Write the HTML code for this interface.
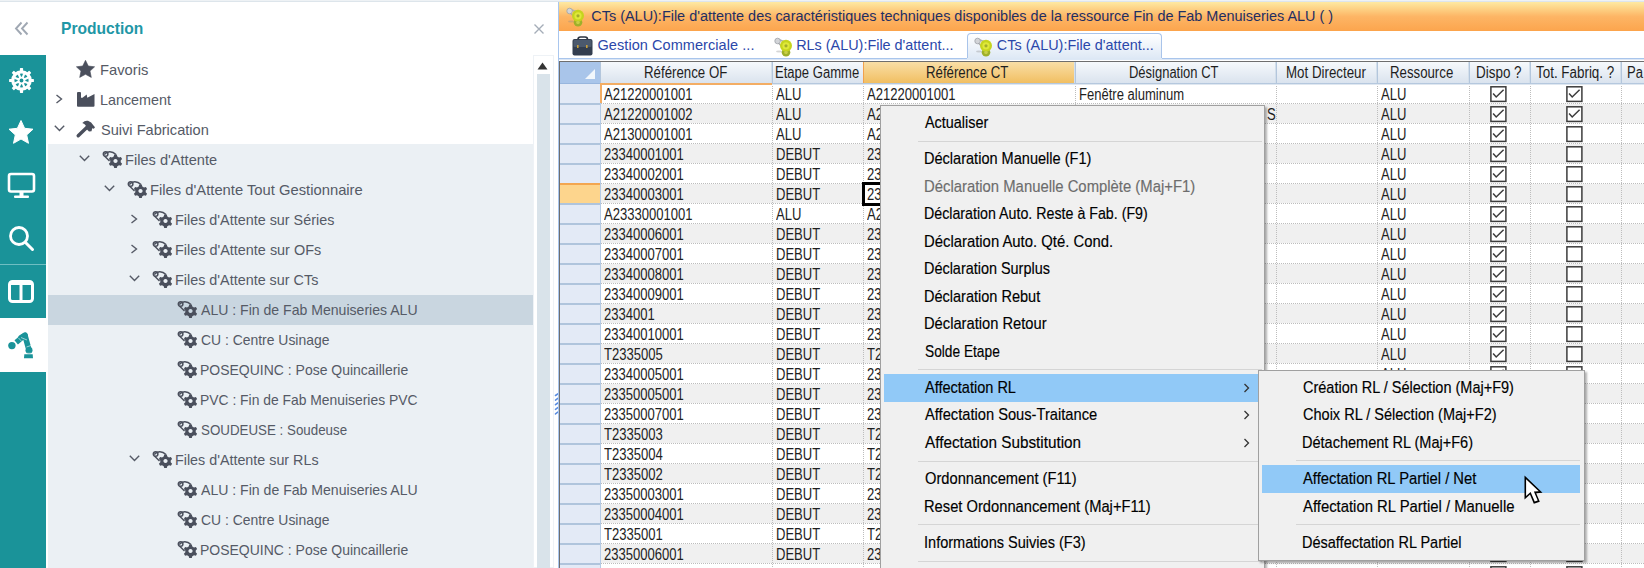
<!DOCTYPE html>
<html><head><meta charset="utf-8">
<style>
*{box-sizing:border-box;margin:0;padding:0}
html,body{width:1644px;height:568px;overflow:hidden;background:#fff;font-family:"Liberation Sans",sans-serif}
body{position:relative}
.a{position:absolute}
.t{position:absolute;white-space:nowrap;line-height:1}
svg{position:absolute;overflow:visible}
</style></head><body>

<div class="a" style="left:0px;top:0px;width:1644px;height:1px;background:#eef2f5;"></div>
<div class="a" style="left:0px;top:1px;width:1644px;height:1px;background:#dde5eb;"></div>
<svg style="left:14px;top:21px" width="16" height="15" viewBox="0 0 16 15"><path d="M7.5 1.5 L2 7.5 L7.5 13.5 M13.5 1.5 L8 7.5 L13.5 13.5" fill="none" stroke="#a0a8b3" stroke-width="1.9"/></svg>
<div class="t" style="left:61.31px;top:20.81px;font-size:15.7px;color:#1f97a6;font-weight:bold;transform:scaleX(0.9938);transform-origin:0 0;">Production</div>
<svg style="left:533px;top:23px" width="12" height="12" viewBox="0 0 12 12"><path d="M1.5 1.5 L10.5 10.5 M10.5 1.5 L1.5 10.5" stroke="#a5adb8" stroke-width="1.4"/></svg>
<div class="a" style="left:0px;top:55px;width:46px;height:513px;background:#1a9399;"></div>
<div class="a" style="left:0px;top:264px;width:46px;height:1px;background:#6fbec2;"></div>
<div class="a" style="left:0px;top:318px;width:46px;height:54px;background:#fff;"></div>
<svg style="left:8.8px;top:67.5px" width="25" height="25" viewBox="-12.5 -12.5 25 25">
<g fill="#fff"><rect x="-1.6" y="-12.4" width="3.2" height="3.4" rx="0.6" transform="rotate(0)"/><rect x="-1.6" y="-12.4" width="3.2" height="3.4" rx="0.6" transform="rotate(45)"/><rect x="-1.6" y="-12.4" width="3.2" height="3.4" rx="0.6" transform="rotate(90)"/><rect x="-1.6" y="-12.4" width="3.2" height="3.4" rx="0.6" transform="rotate(135)"/><rect x="-1.6" y="-12.4" width="3.2" height="3.4" rx="0.6" transform="rotate(180)"/><rect x="-1.6" y="-12.4" width="3.2" height="3.4" rx="0.6" transform="rotate(225)"/><rect x="-1.6" y="-12.4" width="3.2" height="3.4" rx="0.6" transform="rotate(270)"/><rect x="-1.6" y="-12.4" width="3.2" height="3.4" rx="0.6" transform="rotate(315)"/></g>
<circle r="8.7" stroke="#fff" stroke-width="3.2" fill="none"/>
<g stroke="#fff" stroke-width="2.2"><path d="M0 -2.6 V-7.6" transform="rotate(22)"/><path d="M0 -2.6 V-7.6" transform="rotate(67)"/><path d="M0 -2.6 V-7.6" transform="rotate(112)"/><path d="M0 -2.6 V-7.6" transform="rotate(157)"/><path d="M0 -2.6 V-7.6" transform="rotate(202)"/><path d="M0 -2.6 V-7.6" transform="rotate(247)"/><path d="M0 -2.6 V-7.6" transform="rotate(292)"/><path d="M0 -2.6 V-7.6" transform="rotate(337)"/></g>
<circle r="2.9" stroke="#fff" stroke-width="1.9" fill="none"/>
</svg>
<svg style="left:8px;top:120px" width="26" height="25" viewBox="0 0 26 25"><path d="M13 0.5 L16.6 8.3 L25 9.2 L18.7 14.9 L20.5 23.3 L13 19 L5.5 23.3 L7.3 14.9 L1 9.2 L9.4 8.3 Z" fill="#fff" stroke="#fff" stroke-width="1" stroke-linejoin="round"/></svg>
<svg style="left:7px;top:172px" width="29" height="27" viewBox="0 0 29 27"><rect x="2" y="2" width="25" height="17.5" rx="2" fill="none" stroke="#fff" stroke-width="2.6"/><rect x="12.5" y="20" width="4" height="4" fill="#fff"/><rect x="7" y="23.5" width="15" height="2.5" rx="1" fill="#fff"/></svg>
<svg style="left:7px;top:224px" width="28" height="28" viewBox="0 0 28 28"><circle cx="12" cy="12" r="8.5" fill="none" stroke="#fff" stroke-width="2.8"/><path d="M18.5 18.5 L25.5 25.5" stroke="#fff" stroke-width="3" stroke-linecap="round"/></svg>
<svg style="left:8px;top:280px" width="26" height="23" viewBox="0 0 26 23"><rect x="1.5" y="1.5" width="23" height="20" rx="3" fill="none" stroke="#fff" stroke-width="3"/><rect x="11.5" y="2" width="3" height="19" fill="#fff"/><rect x="2" y="2" width="22" height="3" fill="#fff"/></svg>
<svg style="left:4px;top:328px" width="34" height="34" viewBox="0 0 34 34">
<g fill="#1a9399" stroke="#1a9399">
<circle cx="7.9" cy="17.6" r="3.7" stroke="none"/>
<path d="M12.2 14.3 L19.8 8" stroke-width="5.4" stroke-linecap="butt"/><path d="M17 9.5 L21 7" stroke-width="5.4" stroke-linecap="round"/>
<path d="M21 7.5 L24.3 19.5" stroke-width="5.6" stroke-linecap="round"/>
<circle cx="25" cy="22.3" r="3.5" stroke="none"/>
<path d="M20.3 26.2 H28.7 L29 30.2 H20 Z" stroke="none"/>
</g>
<g stroke="#fff" stroke-width="0.8" opacity="0.7"><path d="M14.5 10 L17.5 13.2 M17 9.5 L23 12 M22.5 19 L27 17.5 M21 25.3 H28.5"/></g>
</svg>
<div class="a" style="left:48px;top:144px;width:485px;height:424px;background:#ebf0f4;"></div>
<div class="a" style="left:48px;top:295px;width:485px;height:29.5px;background:#c9d6e0;"></div>
<div class="a" style="left:533px;top:55px;width:21px;height:513px;border:1px solid #eef2f6;background:#fff"></div>
<svg style="left:537px;top:62px" width="11" height="8" viewBox="0 0 11 8"><path d="M5.5 0.5 L10.5 7.5 L0.5 7.5 Z" fill="#333"/></svg>
<div class="a" style="left:537px;top:74px;width:13px;height:494px;background:#d9e3ea;"></div>
<svg style="left:553px;top:392px" width="6" height="28" viewBox="0 0 6 28"><g stroke="#5a8de0" stroke-width="1.6" stroke-linecap="round"><path d="M2.5 3.5 L4.8 1.8"/><path d="M2.5 8.1 L4.8 6.4"/><path d="M2.5 12.7 L4.8 11.0"/><path d="M2.5 17.3 L4.8 15.6"/><path d="M2.5 21.9 L4.8 20.2"/></g></svg>
<svg style="left:76px;top:60px" width="19" height="18" viewBox="0 0 19 18"><path d="M9.5 0.3 L12.3 6 L18.6 6.8 L14 11.1 L15.3 17.4 L9.5 14.3 L3.7 17.4 L5 11.1 L0.4 6.8 L6.7 6 Z" fill="#4a4f5c" stroke="#4a4f5c" stroke-width="0.6" stroke-linejoin="round"/></svg>
<div class="t" style="left:99.62px;top:62.30px;font-size:15px;color:#555a66;transform:scaleX(0.9837);transform-origin:0 0;">Favoris</div>
<svg style="left:55px;top:94px" width="9" height="10" viewBox="0 0 9 10"><path d="M1.5 1 L6.5 5 L1.5 9" fill="none" stroke="#555a66" stroke-width="1.4"/></svg>
<svg style="left:76px;top:91px" width="19" height="16" viewBox="0 0 19 16"><path d="M1 2 Q1 1 2 1 H4 Q5 1 5 2 V6.8 L6.5 6.8 L10.7 3.6 L11.3 6.8 L18.5 3 V14.8 Q18.5 15.8 17.5 15.8 H2 Q1 15.8 1 14.8 Z" fill="#4a4f5c"/></svg>
<div class="t" style="left:99.64px;top:92.30px;font-size:15px;color:#555a66;transform:scaleX(0.9561);transform-origin:0 0;">Lancement</div>
<svg style="left:54px;top:125.4px" width="11" height="7" viewBox="0 0 11 7"><path d="M0.8 0.8 L5.5 5.5 L10.2 0.8" fill="none" stroke="#555a66" stroke-width="1.4"/></svg>
<svg style="left:76px;top:120px" width="20" height="19" viewBox="0 0 20 19"><path d="M2.2 15.8 L10 8.2" stroke="#4a4f5c" stroke-width="3.4" stroke-linecap="round"/><path d="M6.3 3 Q9 0 12 0.8 Q15.5 2 17.5 5.5 L19 7.2 L17.8 8.8 L16.2 8.3 L15.5 11.2 L13 11.5 L9 7.5 L9.8 5.5 Q8.5 3.8 6.3 3 Z" fill="#4a4f5c"/></svg>
<div class="t" style="left:100.60px;top:122.30px;font-size:15px;color:#555a66;transform:scaleX(0.9716);transform-origin:0 0;">Suivi Fabrication</div>
<svg style="left:79px;top:155.4px" width="11" height="7" viewBox="0 0 11 7"><path d="M0.8 0.8 L5.5 5.5 L10.2 0.8" fill="none" stroke="#555a66" stroke-width="1.4"/></svg>
<svg style="left:102px;top:150px" width="21" height="18" viewBox="0 0 21 18"><path d="M2.2 4.5 C5 1 10 0.5 14 4.5" fill="none" stroke="#4a4f5c" stroke-width="1.4"/>
<circle cx="3.6" cy="4" r="2.3" fill="none" stroke="#4a4f5c" stroke-width="1.5"/>
<path d="M3 6.5 L7.5 11" stroke="#4a4f5c" stroke-width="1.4"/>
<g transform="translate(13.5 10.8)"><path d="M-1.3 -6.2 H1.3 L1.8 -4.3 L3.5 -3.3 L5.4 -3.9 L6.6 -1.8 L5.2 -0.4 V1.5 L6.6 2.9 L5.4 5 L3.5 4.4 L1.8 5.4 L1.3 7.3 H-1.3 L-1.8 5.4 L-3.5 4.4 L-5.4 5 L-6.6 2.9 L-5.2 1.5 V-0.4 L-6.6 -1.8 L-5.4 -3.9 L-3.5 -3.3 L-1.8 -4.3 Z M0 -1.9 A2.1 2.1 0 1 0 0.01 -1.9 Z" fill="#4a4f5c" fill-rule="evenodd"/></g></svg>
<div class="t" style="left:124.63px;top:152.30px;font-size:15px;color:#555a66;transform:scaleX(0.9739);transform-origin:0 0;">Files d&#x27;Attente</div>
<svg style="left:104px;top:185.4px" width="11" height="7" viewBox="0 0 11 7"><path d="M0.8 0.8 L5.5 5.5 L10.2 0.8" fill="none" stroke="#555a66" stroke-width="1.4"/></svg>
<svg style="left:127px;top:180px" width="21" height="18" viewBox="0 0 21 18"><path d="M2.2 4.5 C5 1 10 0.5 14 4.5" fill="none" stroke="#4a4f5c" stroke-width="1.4"/>
<circle cx="3.6" cy="4" r="2.3" fill="none" stroke="#4a4f5c" stroke-width="1.5"/>
<path d="M3 6.5 L7.5 11" stroke="#4a4f5c" stroke-width="1.4"/>
<g transform="translate(13.5 10.8)"><path d="M-1.3 -6.2 H1.3 L1.8 -4.3 L3.5 -3.3 L5.4 -3.9 L6.6 -1.8 L5.2 -0.4 V1.5 L6.6 2.9 L5.4 5 L3.5 4.4 L1.8 5.4 L1.3 7.3 H-1.3 L-1.8 5.4 L-3.5 4.4 L-5.4 5 L-6.6 2.9 L-5.2 1.5 V-0.4 L-6.6 -1.8 L-5.4 -3.9 L-3.5 -3.3 L-1.8 -4.3 Z M0 -1.9 A2.1 2.1 0 1 0 0.01 -1.9 Z" fill="#4a4f5c" fill-rule="evenodd"/></g></svg>
<div class="t" style="left:149.62px;top:182.30px;font-size:15px;color:#555a66;transform:scaleX(0.9848);transform-origin:0 0;">Files d&#x27;Attente Tout Gestionnaire</div>
<svg style="left:130px;top:214px" width="9" height="10" viewBox="0 0 9 10"><path d="M1.5 1 L6.5 5 L1.5 9" fill="none" stroke="#555a66" stroke-width="1.4"/></svg>
<svg style="left:152px;top:210px" width="21" height="18" viewBox="0 0 21 18"><path d="M2.2 4.5 C5 1 10 0.5 14 4.5" fill="none" stroke="#4a4f5c" stroke-width="1.4"/>
<circle cx="3.6" cy="4" r="2.3" fill="none" stroke="#4a4f5c" stroke-width="1.5"/>
<path d="M3 6.5 L7.5 11" stroke="#4a4f5c" stroke-width="1.4"/>
<g transform="translate(13.5 10.8)"><path d="M-1.3 -6.2 H1.3 L1.8 -4.3 L3.5 -3.3 L5.4 -3.9 L6.6 -1.8 L5.2 -0.4 V1.5 L6.6 2.9 L5.4 5 L3.5 4.4 L1.8 5.4 L1.3 7.3 H-1.3 L-1.8 5.4 L-3.5 4.4 L-5.4 5 L-6.6 2.9 L-5.2 1.5 V-0.4 L-6.6 -1.8 L-5.4 -3.9 L-3.5 -3.3 L-1.8 -4.3 Z M0 -1.9 A2.1 2.1 0 1 0 0.01 -1.9 Z" fill="#4a4f5c" fill-rule="evenodd"/></g></svg>
<div class="t" style="left:174.64px;top:212.30px;font-size:15px;color:#555a66;transform:scaleX(0.9583);transform-origin:0 0;">Files d&#x27;Attente sur Séries</div>
<svg style="left:130px;top:244px" width="9" height="10" viewBox="0 0 9 10"><path d="M1.5 1 L6.5 5 L1.5 9" fill="none" stroke="#555a66" stroke-width="1.4"/></svg>
<svg style="left:152px;top:240px" width="21" height="18" viewBox="0 0 21 18"><path d="M2.2 4.5 C5 1 10 0.5 14 4.5" fill="none" stroke="#4a4f5c" stroke-width="1.4"/>
<circle cx="3.6" cy="4" r="2.3" fill="none" stroke="#4a4f5c" stroke-width="1.5"/>
<path d="M3 6.5 L7.5 11" stroke="#4a4f5c" stroke-width="1.4"/>
<g transform="translate(13.5 10.8)"><path d="M-1.3 -6.2 H1.3 L1.8 -4.3 L3.5 -3.3 L5.4 -3.9 L6.6 -1.8 L5.2 -0.4 V1.5 L6.6 2.9 L5.4 5 L3.5 4.4 L1.8 5.4 L1.3 7.3 H-1.3 L-1.8 5.4 L-3.5 4.4 L-5.4 5 L-6.6 2.9 L-5.2 1.5 V-0.4 L-6.6 -1.8 L-5.4 -3.9 L-3.5 -3.3 L-1.8 -4.3 Z M0 -1.9 A2.1 2.1 0 1 0 0.01 -1.9 Z" fill="#4a4f5c" fill-rule="evenodd"/></g></svg>
<div class="t" style="left:174.64px;top:242.30px;font-size:15px;color:#555a66;transform:scaleX(0.9610);transform-origin:0 0;">Files d&#x27;Attente sur OFs</div>
<svg style="left:129px;top:275.4px" width="11" height="7" viewBox="0 0 11 7"><path d="M0.8 0.8 L5.5 5.5 L10.2 0.8" fill="none" stroke="#555a66" stroke-width="1.4"/></svg>
<svg style="left:152px;top:270px" width="21" height="18" viewBox="0 0 21 18"><path d="M2.2 4.5 C5 1 10 0.5 14 4.5" fill="none" stroke="#4a4f5c" stroke-width="1.4"/>
<circle cx="3.6" cy="4" r="2.3" fill="none" stroke="#4a4f5c" stroke-width="1.5"/>
<path d="M3 6.5 L7.5 11" stroke="#4a4f5c" stroke-width="1.4"/>
<g transform="translate(13.5 10.8)"><path d="M-1.3 -6.2 H1.3 L1.8 -4.3 L3.5 -3.3 L5.4 -3.9 L6.6 -1.8 L5.2 -0.4 V1.5 L6.6 2.9 L5.4 5 L3.5 4.4 L1.8 5.4 L1.3 7.3 H-1.3 L-1.8 5.4 L-3.5 4.4 L-5.4 5 L-6.6 2.9 L-5.2 1.5 V-0.4 L-6.6 -1.8 L-5.4 -3.9 L-3.5 -3.3 L-1.8 -4.3 Z M0 -1.9 A2.1 2.1 0 1 0 0.01 -1.9 Z" fill="#4a4f5c" fill-rule="evenodd"/></g></svg>
<div class="t" style="left:174.64px;top:272.30px;font-size:15px;color:#555a66;transform:scaleX(0.9582);transform-origin:0 0;">Files d&#x27;Attente sur CTs</div>
<svg style="left:177px;top:300px" width="21" height="18" viewBox="0 0 21 18"><path d="M2.2 4.5 C5 1 10 0.5 14 4.5" fill="none" stroke="#4a4f5c" stroke-width="1.4"/>
<circle cx="3.6" cy="4" r="2.3" fill="none" stroke="#4a4f5c" stroke-width="1.5"/>
<path d="M3 6.5 L7.5 11" stroke="#4a4f5c" stroke-width="1.4"/>
<g transform="translate(13.5 10.8)"><path d="M-1.3 -6.2 H1.3 L1.8 -4.3 L3.5 -3.3 L5.4 -3.9 L6.6 -1.8 L5.2 -0.4 V1.5 L6.6 2.9 L5.4 5 L3.5 4.4 L1.8 5.4 L1.3 7.3 H-1.3 L-1.8 5.4 L-3.5 4.4 L-5.4 5 L-6.6 2.9 L-5.2 1.5 V-0.4 L-6.6 -1.8 L-5.4 -3.9 L-3.5 -3.3 L-1.8 -4.3 Z M0 -1.9 A2.1 2.1 0 1 0 0.01 -1.9 Z" fill="#4a4f5c" fill-rule="evenodd"/></g></svg>
<div class="t" style="left:200.60px;top:302.30px;font-size:15px;color:#555a66;transform:scaleX(0.9379);transform-origin:0 0;">ALU : Fin de Fab Menuiseries ALU</div>
<svg style="left:177px;top:330px" width="21" height="18" viewBox="0 0 21 18"><path d="M2.2 4.5 C5 1 10 0.5 14 4.5" fill="none" stroke="#4a4f5c" stroke-width="1.4"/>
<circle cx="3.6" cy="4" r="2.3" fill="none" stroke="#4a4f5c" stroke-width="1.5"/>
<path d="M3 6.5 L7.5 11" stroke="#4a4f5c" stroke-width="1.4"/>
<g transform="translate(13.5 10.8)"><path d="M-1.3 -6.2 H1.3 L1.8 -4.3 L3.5 -3.3 L5.4 -3.9 L6.6 -1.8 L5.2 -0.4 V1.5 L6.6 2.9 L5.4 5 L3.5 4.4 L1.8 5.4 L1.3 7.3 H-1.3 L-1.8 5.4 L-3.5 4.4 L-5.4 5 L-6.6 2.9 L-5.2 1.5 V-0.4 L-6.6 -1.8 L-5.4 -3.9 L-3.5 -3.3 L-1.8 -4.3 Z M0 -1.9 A2.1 2.1 0 1 0 0.01 -1.9 Z" fill="#4a4f5c" fill-rule="evenodd"/></g></svg>
<div class="t" style="left:200.60px;top:332.30px;font-size:15px;color:#555a66;transform:scaleX(0.9279);transform-origin:0 0;">CU : Centre Usinage</div>
<svg style="left:177px;top:360px" width="21" height="18" viewBox="0 0 21 18"><path d="M2.2 4.5 C5 1 10 0.5 14 4.5" fill="none" stroke="#4a4f5c" stroke-width="1.4"/>
<circle cx="3.6" cy="4" r="2.3" fill="none" stroke="#4a4f5c" stroke-width="1.5"/>
<path d="M3 6.5 L7.5 11" stroke="#4a4f5c" stroke-width="1.4"/>
<g transform="translate(13.5 10.8)"><path d="M-1.3 -6.2 H1.3 L1.8 -4.3 L3.5 -3.3 L5.4 -3.9 L6.6 -1.8 L5.2 -0.4 V1.5 L6.6 2.9 L5.4 5 L3.5 4.4 L1.8 5.4 L1.3 7.3 H-1.3 L-1.8 5.4 L-3.5 4.4 L-5.4 5 L-6.6 2.9 L-5.2 1.5 V-0.4 L-6.6 -1.8 L-5.4 -3.9 L-3.5 -3.3 L-1.8 -4.3 Z M0 -1.9 A2.1 2.1 0 1 0 0.01 -1.9 Z" fill="#4a4f5c" fill-rule="evenodd"/></g></svg>
<div class="t" style="left:199.67px;top:362.30px;font-size:15px;color:#555a66;transform:scaleX(0.9321);transform-origin:0 0;">POSEQUINC : Pose Quincaillerie</div>
<svg style="left:177px;top:390px" width="21" height="18" viewBox="0 0 21 18"><path d="M2.2 4.5 C5 1 10 0.5 14 4.5" fill="none" stroke="#4a4f5c" stroke-width="1.4"/>
<circle cx="3.6" cy="4" r="2.3" fill="none" stroke="#4a4f5c" stroke-width="1.5"/>
<path d="M3 6.5 L7.5 11" stroke="#4a4f5c" stroke-width="1.4"/>
<g transform="translate(13.5 10.8)"><path d="M-1.3 -6.2 H1.3 L1.8 -4.3 L3.5 -3.3 L5.4 -3.9 L6.6 -1.8 L5.2 -0.4 V1.5 L6.6 2.9 L5.4 5 L3.5 4.4 L1.8 5.4 L1.3 7.3 H-1.3 L-1.8 5.4 L-3.5 4.4 L-5.4 5 L-6.6 2.9 L-5.2 1.5 V-0.4 L-6.6 -1.8 L-5.4 -3.9 L-3.5 -3.3 L-1.8 -4.3 Z M0 -1.9 A2.1 2.1 0 1 0 0.01 -1.9 Z" fill="#4a4f5c" fill-rule="evenodd"/></g></svg>
<div class="t" style="left:199.67px;top:392.30px;font-size:15px;color:#555a66;transform:scaleX(0.9250);transform-origin:0 0;">PVC : Fin de Fab Menuiseries PVC</div>
<svg style="left:177px;top:420px" width="21" height="18" viewBox="0 0 21 18"><path d="M2.2 4.5 C5 1 10 0.5 14 4.5" fill="none" stroke="#4a4f5c" stroke-width="1.4"/>
<circle cx="3.6" cy="4" r="2.3" fill="none" stroke="#4a4f5c" stroke-width="1.5"/>
<path d="M3 6.5 L7.5 11" stroke="#4a4f5c" stroke-width="1.4"/>
<g transform="translate(13.5 10.8)"><path d="M-1.3 -6.2 H1.3 L1.8 -4.3 L3.5 -3.3 L5.4 -3.9 L6.6 -1.8 L5.2 -0.4 V1.5 L6.6 2.9 L5.4 5 L3.5 4.4 L1.8 5.4 L1.3 7.3 H-1.3 L-1.8 5.4 L-3.5 4.4 L-5.4 5 L-6.6 2.9 L-5.2 1.5 V-0.4 L-6.6 -1.8 L-5.4 -3.9 L-3.5 -3.3 L-1.8 -4.3 Z M0 -1.9 A2.1 2.1 0 1 0 0.01 -1.9 Z" fill="#4a4f5c" fill-rule="evenodd"/></g></svg>
<div class="t" style="left:200.60px;top:422.30px;font-size:15px;color:#555a66;transform:scaleX(0.8895);transform-origin:0 0;">SOUDEUSE : Soudeuse</div>
<svg style="left:129px;top:455.4px" width="11" height="7" viewBox="0 0 11 7"><path d="M0.8 0.8 L5.5 5.5 L10.2 0.8" fill="none" stroke="#555a66" stroke-width="1.4"/></svg>
<svg style="left:152px;top:450px" width="21" height="18" viewBox="0 0 21 18"><path d="M2.2 4.5 C5 1 10 0.5 14 4.5" fill="none" stroke="#4a4f5c" stroke-width="1.4"/>
<circle cx="3.6" cy="4" r="2.3" fill="none" stroke="#4a4f5c" stroke-width="1.5"/>
<path d="M3 6.5 L7.5 11" stroke="#4a4f5c" stroke-width="1.4"/>
<g transform="translate(13.5 10.8)"><path d="M-1.3 -6.2 H1.3 L1.8 -4.3 L3.5 -3.3 L5.4 -3.9 L6.6 -1.8 L5.2 -0.4 V1.5 L6.6 2.9 L5.4 5 L3.5 4.4 L1.8 5.4 L1.3 7.3 H-1.3 L-1.8 5.4 L-3.5 4.4 L-5.4 5 L-6.6 2.9 L-5.2 1.5 V-0.4 L-6.6 -1.8 L-5.4 -3.9 L-3.5 -3.3 L-1.8 -4.3 Z M0 -1.9 A2.1 2.1 0 1 0 0.01 -1.9 Z" fill="#4a4f5c" fill-rule="evenodd"/></g></svg>
<div class="t" style="left:174.65px;top:452.30px;font-size:15px;color:#555a66;transform:scaleX(0.9542);transform-origin:0 0;">Files d&#x27;Attente sur RLs</div>
<svg style="left:177px;top:480px" width="21" height="18" viewBox="0 0 21 18"><path d="M2.2 4.5 C5 1 10 0.5 14 4.5" fill="none" stroke="#4a4f5c" stroke-width="1.4"/>
<circle cx="3.6" cy="4" r="2.3" fill="none" stroke="#4a4f5c" stroke-width="1.5"/>
<path d="M3 6.5 L7.5 11" stroke="#4a4f5c" stroke-width="1.4"/>
<g transform="translate(13.5 10.8)"><path d="M-1.3 -6.2 H1.3 L1.8 -4.3 L3.5 -3.3 L5.4 -3.9 L6.6 -1.8 L5.2 -0.4 V1.5 L6.6 2.9 L5.4 5 L3.5 4.4 L1.8 5.4 L1.3 7.3 H-1.3 L-1.8 5.4 L-3.5 4.4 L-5.4 5 L-6.6 2.9 L-5.2 1.5 V-0.4 L-6.6 -1.8 L-5.4 -3.9 L-3.5 -3.3 L-1.8 -4.3 Z M0 -1.9 A2.1 2.1 0 1 0 0.01 -1.9 Z" fill="#4a4f5c" fill-rule="evenodd"/></g></svg>
<div class="t" style="left:200.60px;top:482.30px;font-size:15px;color:#555a66;transform:scaleX(0.9384);transform-origin:0 0;">ALU : Fin de Fab Menuiseries ALU</div>
<svg style="left:177px;top:510px" width="21" height="18" viewBox="0 0 21 18"><path d="M2.2 4.5 C5 1 10 0.5 14 4.5" fill="none" stroke="#4a4f5c" stroke-width="1.4"/>
<circle cx="3.6" cy="4" r="2.3" fill="none" stroke="#4a4f5c" stroke-width="1.5"/>
<path d="M3 6.5 L7.5 11" stroke="#4a4f5c" stroke-width="1.4"/>
<g transform="translate(13.5 10.8)"><path d="M-1.3 -6.2 H1.3 L1.8 -4.3 L3.5 -3.3 L5.4 -3.9 L6.6 -1.8 L5.2 -0.4 V1.5 L6.6 2.9 L5.4 5 L3.5 4.4 L1.8 5.4 L1.3 7.3 H-1.3 L-1.8 5.4 L-3.5 4.4 L-5.4 5 L-6.6 2.9 L-5.2 1.5 V-0.4 L-6.6 -1.8 L-5.4 -3.9 L-3.5 -3.3 L-1.8 -4.3 Z M0 -1.9 A2.1 2.1 0 1 0 0.01 -1.9 Z" fill="#4a4f5c" fill-rule="evenodd"/></g></svg>
<div class="t" style="left:200.60px;top:512.30px;font-size:15px;color:#555a66;transform:scaleX(0.9279);transform-origin:0 0;">CU : Centre Usinage</div>
<svg style="left:177px;top:540px" width="21" height="18" viewBox="0 0 21 18"><path d="M2.2 4.5 C5 1 10 0.5 14 4.5" fill="none" stroke="#4a4f5c" stroke-width="1.4"/>
<circle cx="3.6" cy="4" r="2.3" fill="none" stroke="#4a4f5c" stroke-width="1.5"/>
<path d="M3 6.5 L7.5 11" stroke="#4a4f5c" stroke-width="1.4"/>
<g transform="translate(13.5 10.8)"><path d="M-1.3 -6.2 H1.3 L1.8 -4.3 L3.5 -3.3 L5.4 -3.9 L6.6 -1.8 L5.2 -0.4 V1.5 L6.6 2.9 L5.4 5 L3.5 4.4 L1.8 5.4 L1.3 7.3 H-1.3 L-1.8 5.4 L-3.5 4.4 L-5.4 5 L-6.6 2.9 L-5.2 1.5 V-0.4 L-6.6 -1.8 L-5.4 -3.9 L-3.5 -3.3 L-1.8 -4.3 Z M0 -1.9 A2.1 2.1 0 1 0 0.01 -1.9 Z" fill="#4a4f5c" fill-rule="evenodd"/></g></svg>
<div class="t" style="left:199.67px;top:542.30px;font-size:15px;color:#555a66;transform:scaleX(0.9321);transform-origin:0 0;">POSEQUINC : Pose Quincaillerie</div>
<div class="a" style="left:558px;top:2px;width:1px;height:566px;background:#a9c6ee;"></div>
<div class="a" style="left:559px;top:2px;width:1085px;height:28px;background:linear-gradient(#fee9a2 0%,#fdd184 25%,#fdb565 52%,#fca64f 100%);"></div>
<div class="a" style="left:559px;top:30px;width:1085px;height:1px;background:#fca44c;"></div>
<svg style="left:566px;top:7px" width="20" height="20" viewBox="0 0 20 20">
<ellipse cx="5" cy="14.5" rx="3" ry="1" fill="#8a8a8a" opacity="0.35"/>
<path d="M3.5 5 L9 11" stroke="#a8a8a8" stroke-width="1.2"/>
<path d="M4.5 2.5 L10 4.5" stroke="#b0b0b0" stroke-width="1.4"/>
<circle cx="3.6" cy="4" r="2.8" fill="#d2d4d8" stroke="#9ea2a8" stroke-width="0.8"/>
<circle cx="12" cy="15.2" r="4.3" fill="#9fb02a"/>
<circle cx="12" cy="8.8" r="6" fill="#c6d41e"/>
<circle cx="12" cy="8.8" r="3.6" fill="#dfe83a"/>
<circle cx="12" cy="8.8" r="1.6" fill="#a3ad2c"/>
<circle cx="12" cy="15.5" r="1.8" fill="#c7cf48"/>
</svg>
<div class="t" style="left:591.30px;top:9.48px;font-size:14.44px;color:#1f2f63;letter-spacing:-0.000px;">CTs (ALU):File d&#x27;attente des caractéristiques techniques disponibles de la ressource Fin de Fab Menuiseries ALU ( )</div>
<div class="a" style="left:966.5px;top:33px;width:195px;height:26px;background:linear-gradient(#ffffff,#dde8f5);border:1px solid #a9c4ea;border-bottom:none;border-radius:4px 4px 0 0"></div>
<svg style="left:572px;top:36px" width="21" height="20" viewBox="0 0 21 20">
<path d="M6 3.5 Q6 1 8.5 1 H13 Q15.5 1 15.5 3.5" fill="none" stroke="#2c3440" stroke-width="1.6"/>
<rect x="0.5" y="3" width="20" height="16.5" rx="2" fill="#333e4f"/>
<rect x="1.5" y="4" width="18" height="7" rx="1" fill="#4b596d"/>
<rect x="5" y="9" width="1.6" height="3" fill="#c8a03a"/><rect x="14" y="9" width="1.6" height="3" fill="#c8a03a"/>
</svg>
<div class="t" style="left:597.50px;top:38.23px;font-size:14.5px;color:#2b47aa;letter-spacing:0.064px;">Gestion Commerciale ...</div>
<svg style="left:774px;top:37px" width="20" height="20" viewBox="0 0 20 20">
<ellipse cx="5" cy="14.5" rx="3" ry="1" fill="#8a8a8a" opacity="0.35"/>
<path d="M3.5 5 L9 11" stroke="#a8a8a8" stroke-width="1.2"/>
<path d="M4.5 2.5 L10 4.5" stroke="#b0b0b0" stroke-width="1.4"/>
<circle cx="3.6" cy="4" r="2.8" fill="#d2d4d8" stroke="#9ea2a8" stroke-width="0.8"/>
<circle cx="12" cy="15.2" r="4.3" fill="#9fb02a"/>
<circle cx="12" cy="8.8" r="6" fill="#c6d41e"/>
<circle cx="12" cy="8.8" r="3.6" fill="#dfe83a"/>
<circle cx="12" cy="8.8" r="1.6" fill="#a3ad2c"/>
<circle cx="12" cy="15.5" r="1.8" fill="#c7cf48"/>
</svg>
<div class="t" style="left:796.20px;top:38.31px;font-size:14.4px;color:#2b47aa;letter-spacing:0.004px;">RLs (ALU):File d&#x27;attent...</div>
<svg style="left:974px;top:37px" width="20" height="20" viewBox="0 0 20 20">
<ellipse cx="5" cy="14.5" rx="3" ry="1" fill="#8a8a8a" opacity="0.35"/>
<path d="M3.5 5 L9 11" stroke="#a8a8a8" stroke-width="1.2"/>
<path d="M4.5 2.5 L10 4.5" stroke="#b0b0b0" stroke-width="1.4"/>
<circle cx="3.6" cy="4" r="2.8" fill="#d2d4d8" stroke="#9ea2a8" stroke-width="0.8"/>
<circle cx="12" cy="15.2" r="4.3" fill="#9fb02a"/>
<circle cx="12" cy="8.8" r="6" fill="#c6d41e"/>
<circle cx="12" cy="8.8" r="3.6" fill="#dfe83a"/>
<circle cx="12" cy="8.8" r="1.6" fill="#a3ad2c"/>
<circle cx="12" cy="15.5" r="1.8" fill="#c7cf48"/>
</svg>
<div class="t" style="left:996.80px;top:38.31px;font-size:14.4px;color:#2b47aa;letter-spacing:0.028px;">CTs (ALU):File d&#x27;attent...</div>
<div class="a" style="left:559px;top:58px;width:1085px;height:1px;background:#a9c5ec;"></div>
<div class="a" style="left:559px;top:59px;width:1085px;height:1px;background:#dbe6f5;"></div>
<div class="a" style="left:966.5px;top:58px;width:195px;height:2px;background:#dde8f5;"></div>
<div class="a" style="left:559px;top:61px;width:1085px;height:1px;background:#6e6e6e;"></div>
<div class="a" style="left:559px;top:61px;width:1px;height:507px;background:#6e6e6e;"></div>
<div class="a" style="left:560px;top:62px;width:1084px;height:21px;background:linear-gradient(#f6f9fc,#dae3ee);"></div>
<div class="a" style="left:863px;top:62px;width:212px;height:21px;background:linear-gradient(#f9dea6,#f1bf62);"></div>
<div class="a" style="left:560px;top:83px;width:1084px;height:1px;background:#b5c8de;"></div>
<div class="a" style="left:560px;top:62px;width:40px;height:21px;background:#a9c5ea;"></div>
<div class="a" style="left:560px;top:83px;width:40px;height:1px;background:#98b6de;"></div>
<svg style="left:584px;top:68px" width="12" height="12" viewBox="0 0 12 12"><path d="M11 1 V11 H1 Z" fill="#fff" opacity="0.85"/></svg>
<div class="a" style="left:600px;top:62px;width:1px;height:22px;background:#b3c6dc;"></div>
<div class="a" style="left:771px;top:62px;width:1px;height:22px;background:#d3dfeb;"></div>
<div class="a" style="left:772px;top:62px;width:1px;height:22px;background:#b3c6dc;"></div>
<div class="a" style="left:863px;top:62px;width:1px;height:22px;background:#b3c6dc;"></div>
<div class="a" style="left:1074px;top:62px;width:1px;height:22px;background:#d3dfeb;"></div>
<div class="a" style="left:1075px;top:62px;width:1px;height:22px;background:#b3c6dc;"></div>
<div class="a" style="left:1275px;top:62px;width:1px;height:22px;background:#d3dfeb;"></div>
<div class="a" style="left:1276px;top:62px;width:1px;height:22px;background:#b3c6dc;"></div>
<div class="a" style="left:1376px;top:62px;width:1px;height:22px;background:#d3dfeb;"></div>
<div class="a" style="left:1377px;top:62px;width:1px;height:22px;background:#b3c6dc;"></div>
<div class="a" style="left:1468px;top:62px;width:1px;height:22px;background:#d3dfeb;"></div>
<div class="a" style="left:1469px;top:62px;width:1px;height:22px;background:#b3c6dc;"></div>
<div class="a" style="left:1529px;top:62px;width:1px;height:22px;background:#d3dfeb;"></div>
<div class="a" style="left:1530px;top:62px;width:1px;height:22px;background:#b3c6dc;"></div>
<div class="a" style="left:1620px;top:62px;width:1px;height:22px;background:#d3dfeb;"></div>
<div class="a" style="left:1621px;top:62px;width:1px;height:22px;background:#b3c6dc;"></div>
<div class="a" style="left:863px;top:62px;width:1px;height:21px;background:#f2a14e;"></div>
<div class="t" style="left:644.17px;top:65.36px;font-size:16px;color:#1e1e1e;transform:scaleX(0.8294);transform-origin:0 0;">Référence OF</div>
<div class="t" style="left:774.88px;top:65.36px;font-size:16px;color:#1e1e1e;transform:scaleX(0.8156);transform-origin:0 0;">Etape Gamme</div>
<div class="t" style="left:926.47px;top:65.36px;font-size:16px;color:#1e1e1e;transform:scaleX(0.8268);transform-origin:0 0;">Référence CT</div>
<div class="t" style="left:1129.09px;top:65.36px;font-size:16px;color:#1e1e1e;transform:scaleX(0.8110);transform-origin:0 0;">Désignation CT</div>
<div class="t" style="left:1286.47px;top:65.36px;font-size:16px;color:#1e1e1e;transform:scaleX(0.8318);transform-origin:0 0;">Mot Directeur</div>
<div class="t" style="left:1390.37px;top:65.36px;font-size:16px;color:#1e1e1e;transform:scaleX(0.8270);transform-origin:0 0;">Ressource</div>
<div class="t" style="left:1476.26px;top:65.36px;font-size:16px;color:#1e1e1e;transform:scaleX(0.8397);transform-origin:0 0;">Dispo ?</div>
<div class="t" style="left:1536.00px;top:65.36px;font-size:16px;color:#1e1e1e;transform:scaleX(0.8376);transform-origin:0 0;">Tot. Fabriq. ?</div>
<div class="t" style="left:1626.50px;top:65.36px;font-size:16px;color:#1e1e1e;transform:scaleX(0.815);transform-origin:0 0;">Pa</div>
<div class="a" style="left:601px;top:84px;width:1043px;height:19px;background:#ffffff;"></div>
<div class="a" style="left:560px;top:84px;width:40px;height:20px;background:#e3eaf6;"></div>
<div class="a" style="left:600px;top:84px;width:1px;height:20px;background:#b5cbe6;"></div>
<div class="a" style="left:601px;top:103px;width:1043px;height:1px;background:repeating-linear-gradient(90deg,#bdbdbd 0 1px,transparent 1px 2px)"></div>
<div class="a" style="left:772px;top:84px;width:1px;height:20px;background:repeating-linear-gradient(180deg,#bdbdbd 0 1px,transparent 1px 2px)"></div>
<div class="a" style="left:863px;top:84px;width:1px;height:20px;background:repeating-linear-gradient(180deg,#bdbdbd 0 1px,transparent 1px 2px)"></div>
<div class="a" style="left:1075px;top:84px;width:1px;height:20px;background:repeating-linear-gradient(180deg,#bdbdbd 0 1px,transparent 1px 2px)"></div>
<div class="a" style="left:1276px;top:84px;width:1px;height:20px;background:repeating-linear-gradient(180deg,#bdbdbd 0 1px,transparent 1px 2px)"></div>
<div class="a" style="left:1377px;top:84px;width:1px;height:20px;background:repeating-linear-gradient(180deg,#bdbdbd 0 1px,transparent 1px 2px)"></div>
<div class="a" style="left:1469px;top:84px;width:1px;height:20px;background:repeating-linear-gradient(180deg,#bdbdbd 0 1px,transparent 1px 2px)"></div>
<div class="a" style="left:1530px;top:84px;width:1px;height:20px;background:repeating-linear-gradient(180deg,#bdbdbd 0 1px,transparent 1px 2px)"></div>
<div class="a" style="left:1621px;top:84px;width:1px;height:20px;background:repeating-linear-gradient(180deg,#bdbdbd 0 1px,transparent 1px 2px)"></div>
<div class="t" style="left:604.00px;top:86.76px;font-size:16px;color:#1e1e1e;transform:scaleX(0.815);transform-origin:0 0;">A21220001001</div>
<div class="t" style="left:775.50px;top:86.76px;font-size:16px;color:#1e1e1e;transform:scaleX(0.815);transform-origin:0 0;">ALU</div>
<div class="t" style="left:866.50px;top:86.76px;font-size:16px;color:#1e1e1e;transform:scaleX(0.815);transform-origin:0 0;">A21220001001</div>
<div class="t" style="left:1078.50px;top:86.76px;font-size:16px;color:#1e1e1e;transform:scaleX(0.815);transform-origin:0 0;">Fenêtre aluminum</div>
<div class="t" style="left:1380.50px;top:86.76px;font-size:16px;color:#1e1e1e;transform:scaleX(0.815);transform-origin:0 0;">ALU</div>
<svg style="left:1490px;top:86px" width="17" height="16" viewBox="0 0 17 16"><rect x="0.9" y="0.8" width="15" height="14.6" fill="#fff" stroke="#3c3c3c" stroke-width="1.5"/><path d="M3.1 7.6 L6.2 11 L13.6 3.7" fill="none" stroke="#3c3c3c" stroke-width="1.5"/></svg>
<svg style="left:1566px;top:86px" width="17" height="16" viewBox="0 0 17 16"><rect x="0.9" y="0.8" width="15" height="14.6" fill="#fff" stroke="#3c3c3c" stroke-width="1.5"/><path d="M3.1 7.6 L6.2 11 L13.6 3.7" fill="none" stroke="#3c3c3c" stroke-width="1.5"/></svg>
<div class="a" style="left:601px;top:104px;width:1043px;height:19px;background:#f0f0f0;"></div>
<div class="a" style="left:560px;top:104px;width:40px;height:20px;background:#e3eaf6;"></div>
<div class="a" style="left:600px;top:104px;width:1px;height:20px;background:#b5cbe6;"></div>
<div class="a" style="left:601px;top:123px;width:1043px;height:1px;background:repeating-linear-gradient(90deg,#bdbdbd 0 1px,transparent 1px 2px)"></div>
<div class="a" style="left:772px;top:104px;width:1px;height:20px;background:repeating-linear-gradient(180deg,#bdbdbd 0 1px,transparent 1px 2px)"></div>
<div class="a" style="left:863px;top:104px;width:1px;height:20px;background:repeating-linear-gradient(180deg,#bdbdbd 0 1px,transparent 1px 2px)"></div>
<div class="a" style="left:1075px;top:104px;width:1px;height:20px;background:repeating-linear-gradient(180deg,#bdbdbd 0 1px,transparent 1px 2px)"></div>
<div class="a" style="left:1276px;top:104px;width:1px;height:20px;background:repeating-linear-gradient(180deg,#bdbdbd 0 1px,transparent 1px 2px)"></div>
<div class="a" style="left:1377px;top:104px;width:1px;height:20px;background:repeating-linear-gradient(180deg,#bdbdbd 0 1px,transparent 1px 2px)"></div>
<div class="a" style="left:1469px;top:104px;width:1px;height:20px;background:repeating-linear-gradient(180deg,#bdbdbd 0 1px,transparent 1px 2px)"></div>
<div class="a" style="left:1530px;top:104px;width:1px;height:20px;background:repeating-linear-gradient(180deg,#bdbdbd 0 1px,transparent 1px 2px)"></div>
<div class="a" style="left:1621px;top:104px;width:1px;height:20px;background:repeating-linear-gradient(180deg,#bdbdbd 0 1px,transparent 1px 2px)"></div>
<div class="t" style="left:604.00px;top:106.76px;font-size:16px;color:#1e1e1e;transform:scaleX(0.815);transform-origin:0 0;">A21220001002</div>
<div class="t" style="left:775.50px;top:106.76px;font-size:16px;color:#1e1e1e;transform:scaleX(0.815);transform-origin:0 0;">ALU</div>
<div class="t" style="left:866.50px;top:106.76px;font-size:16px;color:#1e1e1e;transform:scaleX(0.815);transform-origin:0 0;">A21220001002</div>
<div class="t" style="left:1380.50px;top:106.76px;font-size:16px;color:#1e1e1e;transform:scaleX(0.815);transform-origin:0 0;">ALU</div>
<div class="t" style="left:1266.80px;top:106.76px;font-size:16px;color:#1e1e1e;transform:scaleX(0.815);transform-origin:0 0;">S</div>
<svg style="left:1490px;top:106px" width="17" height="16" viewBox="0 0 17 16"><rect x="0.9" y="0.8" width="15" height="14.6" fill="#fff" stroke="#3c3c3c" stroke-width="1.5"/><path d="M3.1 7.6 L6.2 11 L13.6 3.7" fill="none" stroke="#3c3c3c" stroke-width="1.5"/></svg>
<svg style="left:1566px;top:106px" width="17" height="16" viewBox="0 0 17 16"><rect x="0.9" y="0.8" width="15" height="14.6" fill="#fff" stroke="#3c3c3c" stroke-width="1.5"/><path d="M3.1 7.6 L6.2 11 L13.6 3.7" fill="none" stroke="#3c3c3c" stroke-width="1.5"/></svg>
<div class="a" style="left:601px;top:124px;width:1043px;height:19px;background:#ffffff;"></div>
<div class="a" style="left:560px;top:124px;width:40px;height:20px;background:#e3eaf6;"></div>
<div class="a" style="left:600px;top:124px;width:1px;height:20px;background:#b5cbe6;"></div>
<div class="a" style="left:601px;top:143px;width:1043px;height:1px;background:repeating-linear-gradient(90deg,#bdbdbd 0 1px,transparent 1px 2px)"></div>
<div class="a" style="left:772px;top:124px;width:1px;height:20px;background:repeating-linear-gradient(180deg,#bdbdbd 0 1px,transparent 1px 2px)"></div>
<div class="a" style="left:863px;top:124px;width:1px;height:20px;background:repeating-linear-gradient(180deg,#bdbdbd 0 1px,transparent 1px 2px)"></div>
<div class="a" style="left:1075px;top:124px;width:1px;height:20px;background:repeating-linear-gradient(180deg,#bdbdbd 0 1px,transparent 1px 2px)"></div>
<div class="a" style="left:1276px;top:124px;width:1px;height:20px;background:repeating-linear-gradient(180deg,#bdbdbd 0 1px,transparent 1px 2px)"></div>
<div class="a" style="left:1377px;top:124px;width:1px;height:20px;background:repeating-linear-gradient(180deg,#bdbdbd 0 1px,transparent 1px 2px)"></div>
<div class="a" style="left:1469px;top:124px;width:1px;height:20px;background:repeating-linear-gradient(180deg,#bdbdbd 0 1px,transparent 1px 2px)"></div>
<div class="a" style="left:1530px;top:124px;width:1px;height:20px;background:repeating-linear-gradient(180deg,#bdbdbd 0 1px,transparent 1px 2px)"></div>
<div class="a" style="left:1621px;top:124px;width:1px;height:20px;background:repeating-linear-gradient(180deg,#bdbdbd 0 1px,transparent 1px 2px)"></div>
<div class="t" style="left:604.00px;top:126.76px;font-size:16px;color:#1e1e1e;transform:scaleX(0.815);transform-origin:0 0;">A21300001001</div>
<div class="t" style="left:775.50px;top:126.76px;font-size:16px;color:#1e1e1e;transform:scaleX(0.815);transform-origin:0 0;">ALU</div>
<div class="t" style="left:866.50px;top:126.76px;font-size:16px;color:#1e1e1e;transform:scaleX(0.815);transform-origin:0 0;">A21300001001</div>
<div class="t" style="left:1380.50px;top:126.76px;font-size:16px;color:#1e1e1e;transform:scaleX(0.815);transform-origin:0 0;">ALU</div>
<svg style="left:1490px;top:126px" width="17" height="16" viewBox="0 0 17 16"><rect x="0.9" y="0.8" width="15" height="14.6" fill="#fff" stroke="#3c3c3c" stroke-width="1.5"/><path d="M3.1 7.6 L6.2 11 L13.6 3.7" fill="none" stroke="#3c3c3c" stroke-width="1.5"/></svg>
<svg style="left:1566px;top:126px" width="17" height="16" viewBox="0 0 17 16"><rect x="0.9" y="0.8" width="15" height="14.6" fill="#fff" stroke="#3c3c3c" stroke-width="1.5"/></svg>
<div class="a" style="left:601px;top:144px;width:1043px;height:19px;background:#f0f0f0;"></div>
<div class="a" style="left:560px;top:144px;width:40px;height:20px;background:#e3eaf6;"></div>
<div class="a" style="left:600px;top:144px;width:1px;height:20px;background:#b5cbe6;"></div>
<div class="a" style="left:601px;top:163px;width:1043px;height:1px;background:repeating-linear-gradient(90deg,#bdbdbd 0 1px,transparent 1px 2px)"></div>
<div class="a" style="left:772px;top:144px;width:1px;height:20px;background:repeating-linear-gradient(180deg,#bdbdbd 0 1px,transparent 1px 2px)"></div>
<div class="a" style="left:863px;top:144px;width:1px;height:20px;background:repeating-linear-gradient(180deg,#bdbdbd 0 1px,transparent 1px 2px)"></div>
<div class="a" style="left:1075px;top:144px;width:1px;height:20px;background:repeating-linear-gradient(180deg,#bdbdbd 0 1px,transparent 1px 2px)"></div>
<div class="a" style="left:1276px;top:144px;width:1px;height:20px;background:repeating-linear-gradient(180deg,#bdbdbd 0 1px,transparent 1px 2px)"></div>
<div class="a" style="left:1377px;top:144px;width:1px;height:20px;background:repeating-linear-gradient(180deg,#bdbdbd 0 1px,transparent 1px 2px)"></div>
<div class="a" style="left:1469px;top:144px;width:1px;height:20px;background:repeating-linear-gradient(180deg,#bdbdbd 0 1px,transparent 1px 2px)"></div>
<div class="a" style="left:1530px;top:144px;width:1px;height:20px;background:repeating-linear-gradient(180deg,#bdbdbd 0 1px,transparent 1px 2px)"></div>
<div class="a" style="left:1621px;top:144px;width:1px;height:20px;background:repeating-linear-gradient(180deg,#bdbdbd 0 1px,transparent 1px 2px)"></div>
<div class="t" style="left:604.00px;top:146.76px;font-size:16px;color:#1e1e1e;transform:scaleX(0.815);transform-origin:0 0;">23340001001</div>
<div class="t" style="left:775.50px;top:146.76px;font-size:16px;color:#1e1e1e;transform:scaleX(0.815);transform-origin:0 0;">DEBUT</div>
<div class="t" style="left:866.50px;top:146.76px;font-size:16px;color:#1e1e1e;transform:scaleX(0.815);transform-origin:0 0;">23340001001</div>
<div class="t" style="left:1380.50px;top:146.76px;font-size:16px;color:#1e1e1e;transform:scaleX(0.815);transform-origin:0 0;">ALU</div>
<svg style="left:1490px;top:146px" width="17" height="16" viewBox="0 0 17 16"><rect x="0.9" y="0.8" width="15" height="14.6" fill="#fff" stroke="#3c3c3c" stroke-width="1.5"/><path d="M3.1 7.6 L6.2 11 L13.6 3.7" fill="none" stroke="#3c3c3c" stroke-width="1.5"/></svg>
<svg style="left:1566px;top:146px" width="17" height="16" viewBox="0 0 17 16"><rect x="0.9" y="0.8" width="15" height="14.6" fill="#fff" stroke="#3c3c3c" stroke-width="1.5"/></svg>
<div class="a" style="left:601px;top:164px;width:1043px;height:19px;background:#ffffff;"></div>
<div class="a" style="left:560px;top:164px;width:40px;height:20px;background:#e3eaf6;"></div>
<div class="a" style="left:600px;top:164px;width:1px;height:20px;background:#b5cbe6;"></div>
<div class="a" style="left:601px;top:183px;width:1043px;height:1px;background:repeating-linear-gradient(90deg,#bdbdbd 0 1px,transparent 1px 2px)"></div>
<div class="a" style="left:772px;top:164px;width:1px;height:20px;background:repeating-linear-gradient(180deg,#bdbdbd 0 1px,transparent 1px 2px)"></div>
<div class="a" style="left:863px;top:164px;width:1px;height:20px;background:repeating-linear-gradient(180deg,#bdbdbd 0 1px,transparent 1px 2px)"></div>
<div class="a" style="left:1075px;top:164px;width:1px;height:20px;background:repeating-linear-gradient(180deg,#bdbdbd 0 1px,transparent 1px 2px)"></div>
<div class="a" style="left:1276px;top:164px;width:1px;height:20px;background:repeating-linear-gradient(180deg,#bdbdbd 0 1px,transparent 1px 2px)"></div>
<div class="a" style="left:1377px;top:164px;width:1px;height:20px;background:repeating-linear-gradient(180deg,#bdbdbd 0 1px,transparent 1px 2px)"></div>
<div class="a" style="left:1469px;top:164px;width:1px;height:20px;background:repeating-linear-gradient(180deg,#bdbdbd 0 1px,transparent 1px 2px)"></div>
<div class="a" style="left:1530px;top:164px;width:1px;height:20px;background:repeating-linear-gradient(180deg,#bdbdbd 0 1px,transparent 1px 2px)"></div>
<div class="a" style="left:1621px;top:164px;width:1px;height:20px;background:repeating-linear-gradient(180deg,#bdbdbd 0 1px,transparent 1px 2px)"></div>
<div class="t" style="left:604.00px;top:166.76px;font-size:16px;color:#1e1e1e;transform:scaleX(0.815);transform-origin:0 0;">23340002001</div>
<div class="t" style="left:775.50px;top:166.76px;font-size:16px;color:#1e1e1e;transform:scaleX(0.815);transform-origin:0 0;">DEBUT</div>
<div class="t" style="left:866.50px;top:166.76px;font-size:16px;color:#1e1e1e;transform:scaleX(0.815);transform-origin:0 0;">23340002001</div>
<div class="t" style="left:1380.50px;top:166.76px;font-size:16px;color:#1e1e1e;transform:scaleX(0.815);transform-origin:0 0;">ALU</div>
<svg style="left:1490px;top:166px" width="17" height="16" viewBox="0 0 17 16"><rect x="0.9" y="0.8" width="15" height="14.6" fill="#fff" stroke="#3c3c3c" stroke-width="1.5"/><path d="M3.1 7.6 L6.2 11 L13.6 3.7" fill="none" stroke="#3c3c3c" stroke-width="1.5"/></svg>
<svg style="left:1566px;top:166px" width="17" height="16" viewBox="0 0 17 16"><rect x="0.9" y="0.8" width="15" height="14.6" fill="#fff" stroke="#3c3c3c" stroke-width="1.5"/></svg>
<div class="a" style="left:601px;top:184px;width:1043px;height:19px;background:#f0f0f0;"></div>
<div class="a" style="left:560px;top:184px;width:40px;height:20px;background:#e3eaf6;"></div>
<div class="a" style="left:600px;top:184px;width:1px;height:20px;background:#b5cbe6;"></div>
<div class="a" style="left:601px;top:203px;width:1043px;height:1px;background:repeating-linear-gradient(90deg,#bdbdbd 0 1px,transparent 1px 2px)"></div>
<div class="a" style="left:772px;top:184px;width:1px;height:20px;background:repeating-linear-gradient(180deg,#bdbdbd 0 1px,transparent 1px 2px)"></div>
<div class="a" style="left:863px;top:184px;width:1px;height:20px;background:repeating-linear-gradient(180deg,#bdbdbd 0 1px,transparent 1px 2px)"></div>
<div class="a" style="left:1075px;top:184px;width:1px;height:20px;background:repeating-linear-gradient(180deg,#bdbdbd 0 1px,transparent 1px 2px)"></div>
<div class="a" style="left:1276px;top:184px;width:1px;height:20px;background:repeating-linear-gradient(180deg,#bdbdbd 0 1px,transparent 1px 2px)"></div>
<div class="a" style="left:1377px;top:184px;width:1px;height:20px;background:repeating-linear-gradient(180deg,#bdbdbd 0 1px,transparent 1px 2px)"></div>
<div class="a" style="left:1469px;top:184px;width:1px;height:20px;background:repeating-linear-gradient(180deg,#bdbdbd 0 1px,transparent 1px 2px)"></div>
<div class="a" style="left:1530px;top:184px;width:1px;height:20px;background:repeating-linear-gradient(180deg,#bdbdbd 0 1px,transparent 1px 2px)"></div>
<div class="a" style="left:1621px;top:184px;width:1px;height:20px;background:repeating-linear-gradient(180deg,#bdbdbd 0 1px,transparent 1px 2px)"></div>
<div class="t" style="left:604.00px;top:186.76px;font-size:16px;color:#1e1e1e;transform:scaleX(0.815);transform-origin:0 0;">23340003001</div>
<div class="t" style="left:775.50px;top:186.76px;font-size:16px;color:#1e1e1e;transform:scaleX(0.815);transform-origin:0 0;">DEBUT</div>
<div class="t" style="left:866.50px;top:186.76px;font-size:16px;color:#1e1e1e;transform:scaleX(0.815);transform-origin:0 0;">23340003001</div>
<div class="t" style="left:1380.50px;top:186.76px;font-size:16px;color:#1e1e1e;transform:scaleX(0.815);transform-origin:0 0;">ALU</div>
<svg style="left:1490px;top:186px" width="17" height="16" viewBox="0 0 17 16"><rect x="0.9" y="0.8" width="15" height="14.6" fill="#fff" stroke="#3c3c3c" stroke-width="1.5"/><path d="M3.1 7.6 L6.2 11 L13.6 3.7" fill="none" stroke="#3c3c3c" stroke-width="1.5"/></svg>
<svg style="left:1566px;top:186px" width="17" height="16" viewBox="0 0 17 16"><rect x="0.9" y="0.8" width="15" height="14.6" fill="#fff" stroke="#3c3c3c" stroke-width="1.5"/></svg>
<div class="a" style="left:601px;top:204px;width:1043px;height:19px;background:#ffffff;"></div>
<div class="a" style="left:560px;top:204px;width:40px;height:20px;background:#e3eaf6;"></div>
<div class="a" style="left:600px;top:204px;width:1px;height:20px;background:#b5cbe6;"></div>
<div class="a" style="left:601px;top:223px;width:1043px;height:1px;background:repeating-linear-gradient(90deg,#bdbdbd 0 1px,transparent 1px 2px)"></div>
<div class="a" style="left:772px;top:204px;width:1px;height:20px;background:repeating-linear-gradient(180deg,#bdbdbd 0 1px,transparent 1px 2px)"></div>
<div class="a" style="left:863px;top:204px;width:1px;height:20px;background:repeating-linear-gradient(180deg,#bdbdbd 0 1px,transparent 1px 2px)"></div>
<div class="a" style="left:1075px;top:204px;width:1px;height:20px;background:repeating-linear-gradient(180deg,#bdbdbd 0 1px,transparent 1px 2px)"></div>
<div class="a" style="left:1276px;top:204px;width:1px;height:20px;background:repeating-linear-gradient(180deg,#bdbdbd 0 1px,transparent 1px 2px)"></div>
<div class="a" style="left:1377px;top:204px;width:1px;height:20px;background:repeating-linear-gradient(180deg,#bdbdbd 0 1px,transparent 1px 2px)"></div>
<div class="a" style="left:1469px;top:204px;width:1px;height:20px;background:repeating-linear-gradient(180deg,#bdbdbd 0 1px,transparent 1px 2px)"></div>
<div class="a" style="left:1530px;top:204px;width:1px;height:20px;background:repeating-linear-gradient(180deg,#bdbdbd 0 1px,transparent 1px 2px)"></div>
<div class="a" style="left:1621px;top:204px;width:1px;height:20px;background:repeating-linear-gradient(180deg,#bdbdbd 0 1px,transparent 1px 2px)"></div>
<div class="t" style="left:604.00px;top:206.76px;font-size:16px;color:#1e1e1e;transform:scaleX(0.815);transform-origin:0 0;">A23330001001</div>
<div class="t" style="left:775.50px;top:206.76px;font-size:16px;color:#1e1e1e;transform:scaleX(0.815);transform-origin:0 0;">ALU</div>
<div class="t" style="left:866.50px;top:206.76px;font-size:16px;color:#1e1e1e;transform:scaleX(0.815);transform-origin:0 0;">A23330001001</div>
<div class="t" style="left:1380.50px;top:206.76px;font-size:16px;color:#1e1e1e;transform:scaleX(0.815);transform-origin:0 0;">ALU</div>
<svg style="left:1490px;top:206px" width="17" height="16" viewBox="0 0 17 16"><rect x="0.9" y="0.8" width="15" height="14.6" fill="#fff" stroke="#3c3c3c" stroke-width="1.5"/><path d="M3.1 7.6 L6.2 11 L13.6 3.7" fill="none" stroke="#3c3c3c" stroke-width="1.5"/></svg>
<svg style="left:1566px;top:206px" width="17" height="16" viewBox="0 0 17 16"><rect x="0.9" y="0.8" width="15" height="14.6" fill="#fff" stroke="#3c3c3c" stroke-width="1.5"/></svg>
<div class="a" style="left:601px;top:224px;width:1043px;height:19px;background:#f0f0f0;"></div>
<div class="a" style="left:560px;top:224px;width:40px;height:20px;background:#e3eaf6;"></div>
<div class="a" style="left:600px;top:224px;width:1px;height:20px;background:#b5cbe6;"></div>
<div class="a" style="left:601px;top:243px;width:1043px;height:1px;background:repeating-linear-gradient(90deg,#bdbdbd 0 1px,transparent 1px 2px)"></div>
<div class="a" style="left:772px;top:224px;width:1px;height:20px;background:repeating-linear-gradient(180deg,#bdbdbd 0 1px,transparent 1px 2px)"></div>
<div class="a" style="left:863px;top:224px;width:1px;height:20px;background:repeating-linear-gradient(180deg,#bdbdbd 0 1px,transparent 1px 2px)"></div>
<div class="a" style="left:1075px;top:224px;width:1px;height:20px;background:repeating-linear-gradient(180deg,#bdbdbd 0 1px,transparent 1px 2px)"></div>
<div class="a" style="left:1276px;top:224px;width:1px;height:20px;background:repeating-linear-gradient(180deg,#bdbdbd 0 1px,transparent 1px 2px)"></div>
<div class="a" style="left:1377px;top:224px;width:1px;height:20px;background:repeating-linear-gradient(180deg,#bdbdbd 0 1px,transparent 1px 2px)"></div>
<div class="a" style="left:1469px;top:224px;width:1px;height:20px;background:repeating-linear-gradient(180deg,#bdbdbd 0 1px,transparent 1px 2px)"></div>
<div class="a" style="left:1530px;top:224px;width:1px;height:20px;background:repeating-linear-gradient(180deg,#bdbdbd 0 1px,transparent 1px 2px)"></div>
<div class="a" style="left:1621px;top:224px;width:1px;height:20px;background:repeating-linear-gradient(180deg,#bdbdbd 0 1px,transparent 1px 2px)"></div>
<div class="t" style="left:604.00px;top:226.76px;font-size:16px;color:#1e1e1e;transform:scaleX(0.815);transform-origin:0 0;">23340006001</div>
<div class="t" style="left:775.50px;top:226.76px;font-size:16px;color:#1e1e1e;transform:scaleX(0.815);transform-origin:0 0;">DEBUT</div>
<div class="t" style="left:866.50px;top:226.76px;font-size:16px;color:#1e1e1e;transform:scaleX(0.815);transform-origin:0 0;">23340006001</div>
<div class="t" style="left:1380.50px;top:226.76px;font-size:16px;color:#1e1e1e;transform:scaleX(0.815);transform-origin:0 0;">ALU</div>
<svg style="left:1490px;top:226px" width="17" height="16" viewBox="0 0 17 16"><rect x="0.9" y="0.8" width="15" height="14.6" fill="#fff" stroke="#3c3c3c" stroke-width="1.5"/><path d="M3.1 7.6 L6.2 11 L13.6 3.7" fill="none" stroke="#3c3c3c" stroke-width="1.5"/></svg>
<svg style="left:1566px;top:226px" width="17" height="16" viewBox="0 0 17 16"><rect x="0.9" y="0.8" width="15" height="14.6" fill="#fff" stroke="#3c3c3c" stroke-width="1.5"/></svg>
<div class="a" style="left:601px;top:244px;width:1043px;height:19px;background:#ffffff;"></div>
<div class="a" style="left:560px;top:244px;width:40px;height:20px;background:#e3eaf6;"></div>
<div class="a" style="left:600px;top:244px;width:1px;height:20px;background:#b5cbe6;"></div>
<div class="a" style="left:601px;top:263px;width:1043px;height:1px;background:repeating-linear-gradient(90deg,#bdbdbd 0 1px,transparent 1px 2px)"></div>
<div class="a" style="left:772px;top:244px;width:1px;height:20px;background:repeating-linear-gradient(180deg,#bdbdbd 0 1px,transparent 1px 2px)"></div>
<div class="a" style="left:863px;top:244px;width:1px;height:20px;background:repeating-linear-gradient(180deg,#bdbdbd 0 1px,transparent 1px 2px)"></div>
<div class="a" style="left:1075px;top:244px;width:1px;height:20px;background:repeating-linear-gradient(180deg,#bdbdbd 0 1px,transparent 1px 2px)"></div>
<div class="a" style="left:1276px;top:244px;width:1px;height:20px;background:repeating-linear-gradient(180deg,#bdbdbd 0 1px,transparent 1px 2px)"></div>
<div class="a" style="left:1377px;top:244px;width:1px;height:20px;background:repeating-linear-gradient(180deg,#bdbdbd 0 1px,transparent 1px 2px)"></div>
<div class="a" style="left:1469px;top:244px;width:1px;height:20px;background:repeating-linear-gradient(180deg,#bdbdbd 0 1px,transparent 1px 2px)"></div>
<div class="a" style="left:1530px;top:244px;width:1px;height:20px;background:repeating-linear-gradient(180deg,#bdbdbd 0 1px,transparent 1px 2px)"></div>
<div class="a" style="left:1621px;top:244px;width:1px;height:20px;background:repeating-linear-gradient(180deg,#bdbdbd 0 1px,transparent 1px 2px)"></div>
<div class="t" style="left:604.00px;top:246.76px;font-size:16px;color:#1e1e1e;transform:scaleX(0.815);transform-origin:0 0;">23340007001</div>
<div class="t" style="left:775.50px;top:246.76px;font-size:16px;color:#1e1e1e;transform:scaleX(0.815);transform-origin:0 0;">DEBUT</div>
<div class="t" style="left:866.50px;top:246.76px;font-size:16px;color:#1e1e1e;transform:scaleX(0.815);transform-origin:0 0;">23340007001</div>
<div class="t" style="left:1380.50px;top:246.76px;font-size:16px;color:#1e1e1e;transform:scaleX(0.815);transform-origin:0 0;">ALU</div>
<svg style="left:1490px;top:246px" width="17" height="16" viewBox="0 0 17 16"><rect x="0.9" y="0.8" width="15" height="14.6" fill="#fff" stroke="#3c3c3c" stroke-width="1.5"/><path d="M3.1 7.6 L6.2 11 L13.6 3.7" fill="none" stroke="#3c3c3c" stroke-width="1.5"/></svg>
<svg style="left:1566px;top:246px" width="17" height="16" viewBox="0 0 17 16"><rect x="0.9" y="0.8" width="15" height="14.6" fill="#fff" stroke="#3c3c3c" stroke-width="1.5"/></svg>
<div class="a" style="left:601px;top:264px;width:1043px;height:19px;background:#f0f0f0;"></div>
<div class="a" style="left:560px;top:264px;width:40px;height:20px;background:#e3eaf6;"></div>
<div class="a" style="left:600px;top:264px;width:1px;height:20px;background:#b5cbe6;"></div>
<div class="a" style="left:601px;top:283px;width:1043px;height:1px;background:repeating-linear-gradient(90deg,#bdbdbd 0 1px,transparent 1px 2px)"></div>
<div class="a" style="left:772px;top:264px;width:1px;height:20px;background:repeating-linear-gradient(180deg,#bdbdbd 0 1px,transparent 1px 2px)"></div>
<div class="a" style="left:863px;top:264px;width:1px;height:20px;background:repeating-linear-gradient(180deg,#bdbdbd 0 1px,transparent 1px 2px)"></div>
<div class="a" style="left:1075px;top:264px;width:1px;height:20px;background:repeating-linear-gradient(180deg,#bdbdbd 0 1px,transparent 1px 2px)"></div>
<div class="a" style="left:1276px;top:264px;width:1px;height:20px;background:repeating-linear-gradient(180deg,#bdbdbd 0 1px,transparent 1px 2px)"></div>
<div class="a" style="left:1377px;top:264px;width:1px;height:20px;background:repeating-linear-gradient(180deg,#bdbdbd 0 1px,transparent 1px 2px)"></div>
<div class="a" style="left:1469px;top:264px;width:1px;height:20px;background:repeating-linear-gradient(180deg,#bdbdbd 0 1px,transparent 1px 2px)"></div>
<div class="a" style="left:1530px;top:264px;width:1px;height:20px;background:repeating-linear-gradient(180deg,#bdbdbd 0 1px,transparent 1px 2px)"></div>
<div class="a" style="left:1621px;top:264px;width:1px;height:20px;background:repeating-linear-gradient(180deg,#bdbdbd 0 1px,transparent 1px 2px)"></div>
<div class="t" style="left:604.00px;top:266.76px;font-size:16px;color:#1e1e1e;transform:scaleX(0.815);transform-origin:0 0;">23340008001</div>
<div class="t" style="left:775.50px;top:266.76px;font-size:16px;color:#1e1e1e;transform:scaleX(0.815);transform-origin:0 0;">DEBUT</div>
<div class="t" style="left:866.50px;top:266.76px;font-size:16px;color:#1e1e1e;transform:scaleX(0.815);transform-origin:0 0;">23340008001</div>
<div class="t" style="left:1380.50px;top:266.76px;font-size:16px;color:#1e1e1e;transform:scaleX(0.815);transform-origin:0 0;">ALU</div>
<svg style="left:1490px;top:266px" width="17" height="16" viewBox="0 0 17 16"><rect x="0.9" y="0.8" width="15" height="14.6" fill="#fff" stroke="#3c3c3c" stroke-width="1.5"/><path d="M3.1 7.6 L6.2 11 L13.6 3.7" fill="none" stroke="#3c3c3c" stroke-width="1.5"/></svg>
<svg style="left:1566px;top:266px" width="17" height="16" viewBox="0 0 17 16"><rect x="0.9" y="0.8" width="15" height="14.6" fill="#fff" stroke="#3c3c3c" stroke-width="1.5"/></svg>
<div class="a" style="left:601px;top:284px;width:1043px;height:19px;background:#ffffff;"></div>
<div class="a" style="left:560px;top:284px;width:40px;height:20px;background:#e3eaf6;"></div>
<div class="a" style="left:600px;top:284px;width:1px;height:20px;background:#b5cbe6;"></div>
<div class="a" style="left:601px;top:303px;width:1043px;height:1px;background:repeating-linear-gradient(90deg,#bdbdbd 0 1px,transparent 1px 2px)"></div>
<div class="a" style="left:772px;top:284px;width:1px;height:20px;background:repeating-linear-gradient(180deg,#bdbdbd 0 1px,transparent 1px 2px)"></div>
<div class="a" style="left:863px;top:284px;width:1px;height:20px;background:repeating-linear-gradient(180deg,#bdbdbd 0 1px,transparent 1px 2px)"></div>
<div class="a" style="left:1075px;top:284px;width:1px;height:20px;background:repeating-linear-gradient(180deg,#bdbdbd 0 1px,transparent 1px 2px)"></div>
<div class="a" style="left:1276px;top:284px;width:1px;height:20px;background:repeating-linear-gradient(180deg,#bdbdbd 0 1px,transparent 1px 2px)"></div>
<div class="a" style="left:1377px;top:284px;width:1px;height:20px;background:repeating-linear-gradient(180deg,#bdbdbd 0 1px,transparent 1px 2px)"></div>
<div class="a" style="left:1469px;top:284px;width:1px;height:20px;background:repeating-linear-gradient(180deg,#bdbdbd 0 1px,transparent 1px 2px)"></div>
<div class="a" style="left:1530px;top:284px;width:1px;height:20px;background:repeating-linear-gradient(180deg,#bdbdbd 0 1px,transparent 1px 2px)"></div>
<div class="a" style="left:1621px;top:284px;width:1px;height:20px;background:repeating-linear-gradient(180deg,#bdbdbd 0 1px,transparent 1px 2px)"></div>
<div class="t" style="left:604.00px;top:286.76px;font-size:16px;color:#1e1e1e;transform:scaleX(0.815);transform-origin:0 0;">23340009001</div>
<div class="t" style="left:775.50px;top:286.76px;font-size:16px;color:#1e1e1e;transform:scaleX(0.815);transform-origin:0 0;">DEBUT</div>
<div class="t" style="left:866.50px;top:286.76px;font-size:16px;color:#1e1e1e;transform:scaleX(0.815);transform-origin:0 0;">23340009001</div>
<div class="t" style="left:1380.50px;top:286.76px;font-size:16px;color:#1e1e1e;transform:scaleX(0.815);transform-origin:0 0;">ALU</div>
<svg style="left:1490px;top:286px" width="17" height="16" viewBox="0 0 17 16"><rect x="0.9" y="0.8" width="15" height="14.6" fill="#fff" stroke="#3c3c3c" stroke-width="1.5"/><path d="M3.1 7.6 L6.2 11 L13.6 3.7" fill="none" stroke="#3c3c3c" stroke-width="1.5"/></svg>
<svg style="left:1566px;top:286px" width="17" height="16" viewBox="0 0 17 16"><rect x="0.9" y="0.8" width="15" height="14.6" fill="#fff" stroke="#3c3c3c" stroke-width="1.5"/></svg>
<div class="a" style="left:601px;top:304px;width:1043px;height:19px;background:#f0f0f0;"></div>
<div class="a" style="left:560px;top:304px;width:40px;height:20px;background:#e3eaf6;"></div>
<div class="a" style="left:600px;top:304px;width:1px;height:20px;background:#b5cbe6;"></div>
<div class="a" style="left:601px;top:323px;width:1043px;height:1px;background:repeating-linear-gradient(90deg,#bdbdbd 0 1px,transparent 1px 2px)"></div>
<div class="a" style="left:772px;top:304px;width:1px;height:20px;background:repeating-linear-gradient(180deg,#bdbdbd 0 1px,transparent 1px 2px)"></div>
<div class="a" style="left:863px;top:304px;width:1px;height:20px;background:repeating-linear-gradient(180deg,#bdbdbd 0 1px,transparent 1px 2px)"></div>
<div class="a" style="left:1075px;top:304px;width:1px;height:20px;background:repeating-linear-gradient(180deg,#bdbdbd 0 1px,transparent 1px 2px)"></div>
<div class="a" style="left:1276px;top:304px;width:1px;height:20px;background:repeating-linear-gradient(180deg,#bdbdbd 0 1px,transparent 1px 2px)"></div>
<div class="a" style="left:1377px;top:304px;width:1px;height:20px;background:repeating-linear-gradient(180deg,#bdbdbd 0 1px,transparent 1px 2px)"></div>
<div class="a" style="left:1469px;top:304px;width:1px;height:20px;background:repeating-linear-gradient(180deg,#bdbdbd 0 1px,transparent 1px 2px)"></div>
<div class="a" style="left:1530px;top:304px;width:1px;height:20px;background:repeating-linear-gradient(180deg,#bdbdbd 0 1px,transparent 1px 2px)"></div>
<div class="a" style="left:1621px;top:304px;width:1px;height:20px;background:repeating-linear-gradient(180deg,#bdbdbd 0 1px,transparent 1px 2px)"></div>
<div class="t" style="left:604.00px;top:306.76px;font-size:16px;color:#1e1e1e;transform:scaleX(0.815);transform-origin:0 0;">2334001</div>
<div class="t" style="left:775.50px;top:306.76px;font-size:16px;color:#1e1e1e;transform:scaleX(0.815);transform-origin:0 0;">DEBUT</div>
<div class="t" style="left:866.50px;top:306.76px;font-size:16px;color:#1e1e1e;transform:scaleX(0.815);transform-origin:0 0;">2334001</div>
<div class="t" style="left:1380.50px;top:306.76px;font-size:16px;color:#1e1e1e;transform:scaleX(0.815);transform-origin:0 0;">ALU</div>
<svg style="left:1490px;top:306px" width="17" height="16" viewBox="0 0 17 16"><rect x="0.9" y="0.8" width="15" height="14.6" fill="#fff" stroke="#3c3c3c" stroke-width="1.5"/><path d="M3.1 7.6 L6.2 11 L13.6 3.7" fill="none" stroke="#3c3c3c" stroke-width="1.5"/></svg>
<svg style="left:1566px;top:306px" width="17" height="16" viewBox="0 0 17 16"><rect x="0.9" y="0.8" width="15" height="14.6" fill="#fff" stroke="#3c3c3c" stroke-width="1.5"/></svg>
<div class="a" style="left:601px;top:324px;width:1043px;height:19px;background:#ffffff;"></div>
<div class="a" style="left:560px;top:324px;width:40px;height:20px;background:#e3eaf6;"></div>
<div class="a" style="left:600px;top:324px;width:1px;height:20px;background:#b5cbe6;"></div>
<div class="a" style="left:601px;top:343px;width:1043px;height:1px;background:repeating-linear-gradient(90deg,#bdbdbd 0 1px,transparent 1px 2px)"></div>
<div class="a" style="left:772px;top:324px;width:1px;height:20px;background:repeating-linear-gradient(180deg,#bdbdbd 0 1px,transparent 1px 2px)"></div>
<div class="a" style="left:863px;top:324px;width:1px;height:20px;background:repeating-linear-gradient(180deg,#bdbdbd 0 1px,transparent 1px 2px)"></div>
<div class="a" style="left:1075px;top:324px;width:1px;height:20px;background:repeating-linear-gradient(180deg,#bdbdbd 0 1px,transparent 1px 2px)"></div>
<div class="a" style="left:1276px;top:324px;width:1px;height:20px;background:repeating-linear-gradient(180deg,#bdbdbd 0 1px,transparent 1px 2px)"></div>
<div class="a" style="left:1377px;top:324px;width:1px;height:20px;background:repeating-linear-gradient(180deg,#bdbdbd 0 1px,transparent 1px 2px)"></div>
<div class="a" style="left:1469px;top:324px;width:1px;height:20px;background:repeating-linear-gradient(180deg,#bdbdbd 0 1px,transparent 1px 2px)"></div>
<div class="a" style="left:1530px;top:324px;width:1px;height:20px;background:repeating-linear-gradient(180deg,#bdbdbd 0 1px,transparent 1px 2px)"></div>
<div class="a" style="left:1621px;top:324px;width:1px;height:20px;background:repeating-linear-gradient(180deg,#bdbdbd 0 1px,transparent 1px 2px)"></div>
<div class="t" style="left:604.00px;top:326.76px;font-size:16px;color:#1e1e1e;transform:scaleX(0.815);transform-origin:0 0;">23340010001</div>
<div class="t" style="left:775.50px;top:326.76px;font-size:16px;color:#1e1e1e;transform:scaleX(0.815);transform-origin:0 0;">DEBUT</div>
<div class="t" style="left:866.50px;top:326.76px;font-size:16px;color:#1e1e1e;transform:scaleX(0.815);transform-origin:0 0;">23340010001</div>
<div class="t" style="left:1380.50px;top:326.76px;font-size:16px;color:#1e1e1e;transform:scaleX(0.815);transform-origin:0 0;">ALU</div>
<svg style="left:1490px;top:326px" width="17" height="16" viewBox="0 0 17 16"><rect x="0.9" y="0.8" width="15" height="14.6" fill="#fff" stroke="#3c3c3c" stroke-width="1.5"/><path d="M3.1 7.6 L6.2 11 L13.6 3.7" fill="none" stroke="#3c3c3c" stroke-width="1.5"/></svg>
<svg style="left:1566px;top:326px" width="17" height="16" viewBox="0 0 17 16"><rect x="0.9" y="0.8" width="15" height="14.6" fill="#fff" stroke="#3c3c3c" stroke-width="1.5"/></svg>
<div class="a" style="left:601px;top:344px;width:1043px;height:19px;background:#f0f0f0;"></div>
<div class="a" style="left:560px;top:344px;width:40px;height:20px;background:#e3eaf6;"></div>
<div class="a" style="left:600px;top:344px;width:1px;height:20px;background:#b5cbe6;"></div>
<div class="a" style="left:601px;top:363px;width:1043px;height:1px;background:repeating-linear-gradient(90deg,#bdbdbd 0 1px,transparent 1px 2px)"></div>
<div class="a" style="left:772px;top:344px;width:1px;height:20px;background:repeating-linear-gradient(180deg,#bdbdbd 0 1px,transparent 1px 2px)"></div>
<div class="a" style="left:863px;top:344px;width:1px;height:20px;background:repeating-linear-gradient(180deg,#bdbdbd 0 1px,transparent 1px 2px)"></div>
<div class="a" style="left:1075px;top:344px;width:1px;height:20px;background:repeating-linear-gradient(180deg,#bdbdbd 0 1px,transparent 1px 2px)"></div>
<div class="a" style="left:1276px;top:344px;width:1px;height:20px;background:repeating-linear-gradient(180deg,#bdbdbd 0 1px,transparent 1px 2px)"></div>
<div class="a" style="left:1377px;top:344px;width:1px;height:20px;background:repeating-linear-gradient(180deg,#bdbdbd 0 1px,transparent 1px 2px)"></div>
<div class="a" style="left:1469px;top:344px;width:1px;height:20px;background:repeating-linear-gradient(180deg,#bdbdbd 0 1px,transparent 1px 2px)"></div>
<div class="a" style="left:1530px;top:344px;width:1px;height:20px;background:repeating-linear-gradient(180deg,#bdbdbd 0 1px,transparent 1px 2px)"></div>
<div class="a" style="left:1621px;top:344px;width:1px;height:20px;background:repeating-linear-gradient(180deg,#bdbdbd 0 1px,transparent 1px 2px)"></div>
<div class="t" style="left:604.00px;top:346.76px;font-size:16px;color:#1e1e1e;transform:scaleX(0.815);transform-origin:0 0;">T2335005</div>
<div class="t" style="left:775.50px;top:346.76px;font-size:16px;color:#1e1e1e;transform:scaleX(0.815);transform-origin:0 0;">DEBUT</div>
<div class="t" style="left:866.50px;top:346.76px;font-size:16px;color:#1e1e1e;transform:scaleX(0.815);transform-origin:0 0;">T2335005</div>
<div class="t" style="left:1380.50px;top:346.76px;font-size:16px;color:#1e1e1e;transform:scaleX(0.815);transform-origin:0 0;">ALU</div>
<svg style="left:1490px;top:346px" width="17" height="16" viewBox="0 0 17 16"><rect x="0.9" y="0.8" width="15" height="14.6" fill="#fff" stroke="#3c3c3c" stroke-width="1.5"/><path d="M3.1 7.6 L6.2 11 L13.6 3.7" fill="none" stroke="#3c3c3c" stroke-width="1.5"/></svg>
<svg style="left:1566px;top:346px" width="17" height="16" viewBox="0 0 17 16"><rect x="0.9" y="0.8" width="15" height="14.6" fill="#fff" stroke="#3c3c3c" stroke-width="1.5"/></svg>
<div class="a" style="left:601px;top:364px;width:1043px;height:19px;background:#ffffff;"></div>
<div class="a" style="left:560px;top:364px;width:40px;height:20px;background:#e3eaf6;"></div>
<div class="a" style="left:600px;top:364px;width:1px;height:20px;background:#b5cbe6;"></div>
<div class="a" style="left:601px;top:383px;width:1043px;height:1px;background:repeating-linear-gradient(90deg,#bdbdbd 0 1px,transparent 1px 2px)"></div>
<div class="a" style="left:772px;top:364px;width:1px;height:20px;background:repeating-linear-gradient(180deg,#bdbdbd 0 1px,transparent 1px 2px)"></div>
<div class="a" style="left:863px;top:364px;width:1px;height:20px;background:repeating-linear-gradient(180deg,#bdbdbd 0 1px,transparent 1px 2px)"></div>
<div class="a" style="left:1075px;top:364px;width:1px;height:20px;background:repeating-linear-gradient(180deg,#bdbdbd 0 1px,transparent 1px 2px)"></div>
<div class="a" style="left:1276px;top:364px;width:1px;height:20px;background:repeating-linear-gradient(180deg,#bdbdbd 0 1px,transparent 1px 2px)"></div>
<div class="a" style="left:1377px;top:364px;width:1px;height:20px;background:repeating-linear-gradient(180deg,#bdbdbd 0 1px,transparent 1px 2px)"></div>
<div class="a" style="left:1469px;top:364px;width:1px;height:20px;background:repeating-linear-gradient(180deg,#bdbdbd 0 1px,transparent 1px 2px)"></div>
<div class="a" style="left:1530px;top:364px;width:1px;height:20px;background:repeating-linear-gradient(180deg,#bdbdbd 0 1px,transparent 1px 2px)"></div>
<div class="a" style="left:1621px;top:364px;width:1px;height:20px;background:repeating-linear-gradient(180deg,#bdbdbd 0 1px,transparent 1px 2px)"></div>
<div class="t" style="left:604.00px;top:366.76px;font-size:16px;color:#1e1e1e;transform:scaleX(0.815);transform-origin:0 0;">23340005001</div>
<div class="t" style="left:775.50px;top:366.76px;font-size:16px;color:#1e1e1e;transform:scaleX(0.815);transform-origin:0 0;">DEBUT</div>
<div class="t" style="left:866.50px;top:366.76px;font-size:16px;color:#1e1e1e;transform:scaleX(0.815);transform-origin:0 0;">23340005001</div>
<div class="t" style="left:1380.50px;top:366.76px;font-size:16px;color:#1e1e1e;transform:scaleX(0.815);transform-origin:0 0;">ALU</div>
<svg style="left:1490px;top:366px" width="17" height="16" viewBox="0 0 17 16"><rect x="0.9" y="0.8" width="15" height="14.6" fill="#fff" stroke="#3c3c3c" stroke-width="1.5"/><path d="M3.1 7.6 L6.2 11 L13.6 3.7" fill="none" stroke="#3c3c3c" stroke-width="1.5"/></svg>
<svg style="left:1566px;top:366px" width="17" height="16" viewBox="0 0 17 16"><rect x="0.9" y="0.8" width="15" height="14.6" fill="#fff" stroke="#3c3c3c" stroke-width="1.5"/></svg>
<div class="a" style="left:601px;top:384px;width:1043px;height:19px;background:#f0f0f0;"></div>
<div class="a" style="left:560px;top:384px;width:40px;height:20px;background:#e3eaf6;"></div>
<div class="a" style="left:600px;top:384px;width:1px;height:20px;background:#b5cbe6;"></div>
<div class="a" style="left:601px;top:403px;width:1043px;height:1px;background:repeating-linear-gradient(90deg,#bdbdbd 0 1px,transparent 1px 2px)"></div>
<div class="a" style="left:772px;top:384px;width:1px;height:20px;background:repeating-linear-gradient(180deg,#bdbdbd 0 1px,transparent 1px 2px)"></div>
<div class="a" style="left:863px;top:384px;width:1px;height:20px;background:repeating-linear-gradient(180deg,#bdbdbd 0 1px,transparent 1px 2px)"></div>
<div class="a" style="left:1075px;top:384px;width:1px;height:20px;background:repeating-linear-gradient(180deg,#bdbdbd 0 1px,transparent 1px 2px)"></div>
<div class="a" style="left:1276px;top:384px;width:1px;height:20px;background:repeating-linear-gradient(180deg,#bdbdbd 0 1px,transparent 1px 2px)"></div>
<div class="a" style="left:1377px;top:384px;width:1px;height:20px;background:repeating-linear-gradient(180deg,#bdbdbd 0 1px,transparent 1px 2px)"></div>
<div class="a" style="left:1469px;top:384px;width:1px;height:20px;background:repeating-linear-gradient(180deg,#bdbdbd 0 1px,transparent 1px 2px)"></div>
<div class="a" style="left:1530px;top:384px;width:1px;height:20px;background:repeating-linear-gradient(180deg,#bdbdbd 0 1px,transparent 1px 2px)"></div>
<div class="a" style="left:1621px;top:384px;width:1px;height:20px;background:repeating-linear-gradient(180deg,#bdbdbd 0 1px,transparent 1px 2px)"></div>
<div class="t" style="left:604.00px;top:386.76px;font-size:16px;color:#1e1e1e;transform:scaleX(0.815);transform-origin:0 0;">23350005001</div>
<div class="t" style="left:775.50px;top:386.76px;font-size:16px;color:#1e1e1e;transform:scaleX(0.815);transform-origin:0 0;">DEBUT</div>
<div class="t" style="left:866.50px;top:386.76px;font-size:16px;color:#1e1e1e;transform:scaleX(0.815);transform-origin:0 0;">23350005001</div>
<div class="t" style="left:1380.50px;top:386.76px;font-size:16px;color:#1e1e1e;transform:scaleX(0.815);transform-origin:0 0;">ALU</div>
<svg style="left:1490px;top:386px" width="17" height="16" viewBox="0 0 17 16"><rect x="0.9" y="0.8" width="15" height="14.6" fill="#fff" stroke="#3c3c3c" stroke-width="1.5"/><path d="M3.1 7.6 L6.2 11 L13.6 3.7" fill="none" stroke="#3c3c3c" stroke-width="1.5"/></svg>
<svg style="left:1566px;top:386px" width="17" height="16" viewBox="0 0 17 16"><rect x="0.9" y="0.8" width="15" height="14.6" fill="#fff" stroke="#3c3c3c" stroke-width="1.5"/></svg>
<div class="a" style="left:601px;top:404px;width:1043px;height:19px;background:#ffffff;"></div>
<div class="a" style="left:560px;top:404px;width:40px;height:20px;background:#e3eaf6;"></div>
<div class="a" style="left:600px;top:404px;width:1px;height:20px;background:#b5cbe6;"></div>
<div class="a" style="left:601px;top:423px;width:1043px;height:1px;background:repeating-linear-gradient(90deg,#bdbdbd 0 1px,transparent 1px 2px)"></div>
<div class="a" style="left:772px;top:404px;width:1px;height:20px;background:repeating-linear-gradient(180deg,#bdbdbd 0 1px,transparent 1px 2px)"></div>
<div class="a" style="left:863px;top:404px;width:1px;height:20px;background:repeating-linear-gradient(180deg,#bdbdbd 0 1px,transparent 1px 2px)"></div>
<div class="a" style="left:1075px;top:404px;width:1px;height:20px;background:repeating-linear-gradient(180deg,#bdbdbd 0 1px,transparent 1px 2px)"></div>
<div class="a" style="left:1276px;top:404px;width:1px;height:20px;background:repeating-linear-gradient(180deg,#bdbdbd 0 1px,transparent 1px 2px)"></div>
<div class="a" style="left:1377px;top:404px;width:1px;height:20px;background:repeating-linear-gradient(180deg,#bdbdbd 0 1px,transparent 1px 2px)"></div>
<div class="a" style="left:1469px;top:404px;width:1px;height:20px;background:repeating-linear-gradient(180deg,#bdbdbd 0 1px,transparent 1px 2px)"></div>
<div class="a" style="left:1530px;top:404px;width:1px;height:20px;background:repeating-linear-gradient(180deg,#bdbdbd 0 1px,transparent 1px 2px)"></div>
<div class="a" style="left:1621px;top:404px;width:1px;height:20px;background:repeating-linear-gradient(180deg,#bdbdbd 0 1px,transparent 1px 2px)"></div>
<div class="t" style="left:604.00px;top:406.76px;font-size:16px;color:#1e1e1e;transform:scaleX(0.815);transform-origin:0 0;">23350007001</div>
<div class="t" style="left:775.50px;top:406.76px;font-size:16px;color:#1e1e1e;transform:scaleX(0.815);transform-origin:0 0;">DEBUT</div>
<div class="t" style="left:866.50px;top:406.76px;font-size:16px;color:#1e1e1e;transform:scaleX(0.815);transform-origin:0 0;">23350007001</div>
<div class="t" style="left:1380.50px;top:406.76px;font-size:16px;color:#1e1e1e;transform:scaleX(0.815);transform-origin:0 0;">ALU</div>
<svg style="left:1490px;top:406px" width="17" height="16" viewBox="0 0 17 16"><rect x="0.9" y="0.8" width="15" height="14.6" fill="#fff" stroke="#3c3c3c" stroke-width="1.5"/><path d="M3.1 7.6 L6.2 11 L13.6 3.7" fill="none" stroke="#3c3c3c" stroke-width="1.5"/></svg>
<svg style="left:1566px;top:406px" width="17" height="16" viewBox="0 0 17 16"><rect x="0.9" y="0.8" width="15" height="14.6" fill="#fff" stroke="#3c3c3c" stroke-width="1.5"/></svg>
<div class="a" style="left:601px;top:424px;width:1043px;height:19px;background:#f0f0f0;"></div>
<div class="a" style="left:560px;top:424px;width:40px;height:20px;background:#e3eaf6;"></div>
<div class="a" style="left:600px;top:424px;width:1px;height:20px;background:#b5cbe6;"></div>
<div class="a" style="left:601px;top:443px;width:1043px;height:1px;background:repeating-linear-gradient(90deg,#bdbdbd 0 1px,transparent 1px 2px)"></div>
<div class="a" style="left:772px;top:424px;width:1px;height:20px;background:repeating-linear-gradient(180deg,#bdbdbd 0 1px,transparent 1px 2px)"></div>
<div class="a" style="left:863px;top:424px;width:1px;height:20px;background:repeating-linear-gradient(180deg,#bdbdbd 0 1px,transparent 1px 2px)"></div>
<div class="a" style="left:1075px;top:424px;width:1px;height:20px;background:repeating-linear-gradient(180deg,#bdbdbd 0 1px,transparent 1px 2px)"></div>
<div class="a" style="left:1276px;top:424px;width:1px;height:20px;background:repeating-linear-gradient(180deg,#bdbdbd 0 1px,transparent 1px 2px)"></div>
<div class="a" style="left:1377px;top:424px;width:1px;height:20px;background:repeating-linear-gradient(180deg,#bdbdbd 0 1px,transparent 1px 2px)"></div>
<div class="a" style="left:1469px;top:424px;width:1px;height:20px;background:repeating-linear-gradient(180deg,#bdbdbd 0 1px,transparent 1px 2px)"></div>
<div class="a" style="left:1530px;top:424px;width:1px;height:20px;background:repeating-linear-gradient(180deg,#bdbdbd 0 1px,transparent 1px 2px)"></div>
<div class="a" style="left:1621px;top:424px;width:1px;height:20px;background:repeating-linear-gradient(180deg,#bdbdbd 0 1px,transparent 1px 2px)"></div>
<div class="t" style="left:604.00px;top:426.76px;font-size:16px;color:#1e1e1e;transform:scaleX(0.815);transform-origin:0 0;">T2335003</div>
<div class="t" style="left:775.50px;top:426.76px;font-size:16px;color:#1e1e1e;transform:scaleX(0.815);transform-origin:0 0;">DEBUT</div>
<div class="t" style="left:866.50px;top:426.76px;font-size:16px;color:#1e1e1e;transform:scaleX(0.815);transform-origin:0 0;">T2335003</div>
<div class="t" style="left:1380.50px;top:426.76px;font-size:16px;color:#1e1e1e;transform:scaleX(0.815);transform-origin:0 0;">ALU</div>
<svg style="left:1490px;top:426px" width="17" height="16" viewBox="0 0 17 16"><rect x="0.9" y="0.8" width="15" height="14.6" fill="#fff" stroke="#3c3c3c" stroke-width="1.5"/><path d="M3.1 7.6 L6.2 11 L13.6 3.7" fill="none" stroke="#3c3c3c" stroke-width="1.5"/></svg>
<svg style="left:1566px;top:426px" width="17" height="16" viewBox="0 0 17 16"><rect x="0.9" y="0.8" width="15" height="14.6" fill="#fff" stroke="#3c3c3c" stroke-width="1.5"/></svg>
<div class="a" style="left:601px;top:444px;width:1043px;height:19px;background:#ffffff;"></div>
<div class="a" style="left:560px;top:444px;width:40px;height:20px;background:#e3eaf6;"></div>
<div class="a" style="left:600px;top:444px;width:1px;height:20px;background:#b5cbe6;"></div>
<div class="a" style="left:601px;top:463px;width:1043px;height:1px;background:repeating-linear-gradient(90deg,#bdbdbd 0 1px,transparent 1px 2px)"></div>
<div class="a" style="left:772px;top:444px;width:1px;height:20px;background:repeating-linear-gradient(180deg,#bdbdbd 0 1px,transparent 1px 2px)"></div>
<div class="a" style="left:863px;top:444px;width:1px;height:20px;background:repeating-linear-gradient(180deg,#bdbdbd 0 1px,transparent 1px 2px)"></div>
<div class="a" style="left:1075px;top:444px;width:1px;height:20px;background:repeating-linear-gradient(180deg,#bdbdbd 0 1px,transparent 1px 2px)"></div>
<div class="a" style="left:1276px;top:444px;width:1px;height:20px;background:repeating-linear-gradient(180deg,#bdbdbd 0 1px,transparent 1px 2px)"></div>
<div class="a" style="left:1377px;top:444px;width:1px;height:20px;background:repeating-linear-gradient(180deg,#bdbdbd 0 1px,transparent 1px 2px)"></div>
<div class="a" style="left:1469px;top:444px;width:1px;height:20px;background:repeating-linear-gradient(180deg,#bdbdbd 0 1px,transparent 1px 2px)"></div>
<div class="a" style="left:1530px;top:444px;width:1px;height:20px;background:repeating-linear-gradient(180deg,#bdbdbd 0 1px,transparent 1px 2px)"></div>
<div class="a" style="left:1621px;top:444px;width:1px;height:20px;background:repeating-linear-gradient(180deg,#bdbdbd 0 1px,transparent 1px 2px)"></div>
<div class="t" style="left:604.00px;top:446.76px;font-size:16px;color:#1e1e1e;transform:scaleX(0.815);transform-origin:0 0;">T2335004</div>
<div class="t" style="left:775.50px;top:446.76px;font-size:16px;color:#1e1e1e;transform:scaleX(0.815);transform-origin:0 0;">DEBUT</div>
<div class="t" style="left:866.50px;top:446.76px;font-size:16px;color:#1e1e1e;transform:scaleX(0.815);transform-origin:0 0;">T2335004</div>
<div class="t" style="left:1380.50px;top:446.76px;font-size:16px;color:#1e1e1e;transform:scaleX(0.815);transform-origin:0 0;">ALU</div>
<svg style="left:1490px;top:446px" width="17" height="16" viewBox="0 0 17 16"><rect x="0.9" y="0.8" width="15" height="14.6" fill="#fff" stroke="#3c3c3c" stroke-width="1.5"/><path d="M3.1 7.6 L6.2 11 L13.6 3.7" fill="none" stroke="#3c3c3c" stroke-width="1.5"/></svg>
<svg style="left:1566px;top:446px" width="17" height="16" viewBox="0 0 17 16"><rect x="0.9" y="0.8" width="15" height="14.6" fill="#fff" stroke="#3c3c3c" stroke-width="1.5"/></svg>
<div class="a" style="left:601px;top:464px;width:1043px;height:19px;background:#f0f0f0;"></div>
<div class="a" style="left:560px;top:464px;width:40px;height:20px;background:#e3eaf6;"></div>
<div class="a" style="left:600px;top:464px;width:1px;height:20px;background:#b5cbe6;"></div>
<div class="a" style="left:601px;top:483px;width:1043px;height:1px;background:repeating-linear-gradient(90deg,#bdbdbd 0 1px,transparent 1px 2px)"></div>
<div class="a" style="left:772px;top:464px;width:1px;height:20px;background:repeating-linear-gradient(180deg,#bdbdbd 0 1px,transparent 1px 2px)"></div>
<div class="a" style="left:863px;top:464px;width:1px;height:20px;background:repeating-linear-gradient(180deg,#bdbdbd 0 1px,transparent 1px 2px)"></div>
<div class="a" style="left:1075px;top:464px;width:1px;height:20px;background:repeating-linear-gradient(180deg,#bdbdbd 0 1px,transparent 1px 2px)"></div>
<div class="a" style="left:1276px;top:464px;width:1px;height:20px;background:repeating-linear-gradient(180deg,#bdbdbd 0 1px,transparent 1px 2px)"></div>
<div class="a" style="left:1377px;top:464px;width:1px;height:20px;background:repeating-linear-gradient(180deg,#bdbdbd 0 1px,transparent 1px 2px)"></div>
<div class="a" style="left:1469px;top:464px;width:1px;height:20px;background:repeating-linear-gradient(180deg,#bdbdbd 0 1px,transparent 1px 2px)"></div>
<div class="a" style="left:1530px;top:464px;width:1px;height:20px;background:repeating-linear-gradient(180deg,#bdbdbd 0 1px,transparent 1px 2px)"></div>
<div class="a" style="left:1621px;top:464px;width:1px;height:20px;background:repeating-linear-gradient(180deg,#bdbdbd 0 1px,transparent 1px 2px)"></div>
<div class="t" style="left:604.00px;top:466.76px;font-size:16px;color:#1e1e1e;transform:scaleX(0.815);transform-origin:0 0;">T2335002</div>
<div class="t" style="left:775.50px;top:466.76px;font-size:16px;color:#1e1e1e;transform:scaleX(0.815);transform-origin:0 0;">DEBUT</div>
<div class="t" style="left:866.50px;top:466.76px;font-size:16px;color:#1e1e1e;transform:scaleX(0.815);transform-origin:0 0;">T2335002</div>
<div class="t" style="left:1380.50px;top:466.76px;font-size:16px;color:#1e1e1e;transform:scaleX(0.815);transform-origin:0 0;">ALU</div>
<svg style="left:1490px;top:466px" width="17" height="16" viewBox="0 0 17 16"><rect x="0.9" y="0.8" width="15" height="14.6" fill="#fff" stroke="#3c3c3c" stroke-width="1.5"/><path d="M3.1 7.6 L6.2 11 L13.6 3.7" fill="none" stroke="#3c3c3c" stroke-width="1.5"/></svg>
<svg style="left:1566px;top:466px" width="17" height="16" viewBox="0 0 17 16"><rect x="0.9" y="0.8" width="15" height="14.6" fill="#fff" stroke="#3c3c3c" stroke-width="1.5"/></svg>
<div class="a" style="left:601px;top:484px;width:1043px;height:19px;background:#ffffff;"></div>
<div class="a" style="left:560px;top:484px;width:40px;height:20px;background:#e3eaf6;"></div>
<div class="a" style="left:600px;top:484px;width:1px;height:20px;background:#b5cbe6;"></div>
<div class="a" style="left:601px;top:503px;width:1043px;height:1px;background:repeating-linear-gradient(90deg,#bdbdbd 0 1px,transparent 1px 2px)"></div>
<div class="a" style="left:772px;top:484px;width:1px;height:20px;background:repeating-linear-gradient(180deg,#bdbdbd 0 1px,transparent 1px 2px)"></div>
<div class="a" style="left:863px;top:484px;width:1px;height:20px;background:repeating-linear-gradient(180deg,#bdbdbd 0 1px,transparent 1px 2px)"></div>
<div class="a" style="left:1075px;top:484px;width:1px;height:20px;background:repeating-linear-gradient(180deg,#bdbdbd 0 1px,transparent 1px 2px)"></div>
<div class="a" style="left:1276px;top:484px;width:1px;height:20px;background:repeating-linear-gradient(180deg,#bdbdbd 0 1px,transparent 1px 2px)"></div>
<div class="a" style="left:1377px;top:484px;width:1px;height:20px;background:repeating-linear-gradient(180deg,#bdbdbd 0 1px,transparent 1px 2px)"></div>
<div class="a" style="left:1469px;top:484px;width:1px;height:20px;background:repeating-linear-gradient(180deg,#bdbdbd 0 1px,transparent 1px 2px)"></div>
<div class="a" style="left:1530px;top:484px;width:1px;height:20px;background:repeating-linear-gradient(180deg,#bdbdbd 0 1px,transparent 1px 2px)"></div>
<div class="a" style="left:1621px;top:484px;width:1px;height:20px;background:repeating-linear-gradient(180deg,#bdbdbd 0 1px,transparent 1px 2px)"></div>
<div class="t" style="left:604.00px;top:486.76px;font-size:16px;color:#1e1e1e;transform:scaleX(0.815);transform-origin:0 0;">23350003001</div>
<div class="t" style="left:775.50px;top:486.76px;font-size:16px;color:#1e1e1e;transform:scaleX(0.815);transform-origin:0 0;">DEBUT</div>
<div class="t" style="left:866.50px;top:486.76px;font-size:16px;color:#1e1e1e;transform:scaleX(0.815);transform-origin:0 0;">23350003001</div>
<div class="t" style="left:1380.50px;top:486.76px;font-size:16px;color:#1e1e1e;transform:scaleX(0.815);transform-origin:0 0;">ALU</div>
<svg style="left:1490px;top:486px" width="17" height="16" viewBox="0 0 17 16"><rect x="0.9" y="0.8" width="15" height="14.6" fill="#fff" stroke="#3c3c3c" stroke-width="1.5"/><path d="M3.1 7.6 L6.2 11 L13.6 3.7" fill="none" stroke="#3c3c3c" stroke-width="1.5"/></svg>
<svg style="left:1566px;top:486px" width="17" height="16" viewBox="0 0 17 16"><rect x="0.9" y="0.8" width="15" height="14.6" fill="#fff" stroke="#3c3c3c" stroke-width="1.5"/></svg>
<div class="a" style="left:601px;top:504px;width:1043px;height:19px;background:#f0f0f0;"></div>
<div class="a" style="left:560px;top:504px;width:40px;height:20px;background:#e3eaf6;"></div>
<div class="a" style="left:600px;top:504px;width:1px;height:20px;background:#b5cbe6;"></div>
<div class="a" style="left:601px;top:523px;width:1043px;height:1px;background:repeating-linear-gradient(90deg,#bdbdbd 0 1px,transparent 1px 2px)"></div>
<div class="a" style="left:772px;top:504px;width:1px;height:20px;background:repeating-linear-gradient(180deg,#bdbdbd 0 1px,transparent 1px 2px)"></div>
<div class="a" style="left:863px;top:504px;width:1px;height:20px;background:repeating-linear-gradient(180deg,#bdbdbd 0 1px,transparent 1px 2px)"></div>
<div class="a" style="left:1075px;top:504px;width:1px;height:20px;background:repeating-linear-gradient(180deg,#bdbdbd 0 1px,transparent 1px 2px)"></div>
<div class="a" style="left:1276px;top:504px;width:1px;height:20px;background:repeating-linear-gradient(180deg,#bdbdbd 0 1px,transparent 1px 2px)"></div>
<div class="a" style="left:1377px;top:504px;width:1px;height:20px;background:repeating-linear-gradient(180deg,#bdbdbd 0 1px,transparent 1px 2px)"></div>
<div class="a" style="left:1469px;top:504px;width:1px;height:20px;background:repeating-linear-gradient(180deg,#bdbdbd 0 1px,transparent 1px 2px)"></div>
<div class="a" style="left:1530px;top:504px;width:1px;height:20px;background:repeating-linear-gradient(180deg,#bdbdbd 0 1px,transparent 1px 2px)"></div>
<div class="a" style="left:1621px;top:504px;width:1px;height:20px;background:repeating-linear-gradient(180deg,#bdbdbd 0 1px,transparent 1px 2px)"></div>
<div class="t" style="left:604.00px;top:506.76px;font-size:16px;color:#1e1e1e;transform:scaleX(0.815);transform-origin:0 0;">23350004001</div>
<div class="t" style="left:775.50px;top:506.76px;font-size:16px;color:#1e1e1e;transform:scaleX(0.815);transform-origin:0 0;">DEBUT</div>
<div class="t" style="left:866.50px;top:506.76px;font-size:16px;color:#1e1e1e;transform:scaleX(0.815);transform-origin:0 0;">23350004001</div>
<div class="t" style="left:1380.50px;top:506.76px;font-size:16px;color:#1e1e1e;transform:scaleX(0.815);transform-origin:0 0;">ALU</div>
<svg style="left:1490px;top:506px" width="17" height="16" viewBox="0 0 17 16"><rect x="0.9" y="0.8" width="15" height="14.6" fill="#fff" stroke="#3c3c3c" stroke-width="1.5"/><path d="M3.1 7.6 L6.2 11 L13.6 3.7" fill="none" stroke="#3c3c3c" stroke-width="1.5"/></svg>
<svg style="left:1566px;top:506px" width="17" height="16" viewBox="0 0 17 16"><rect x="0.9" y="0.8" width="15" height="14.6" fill="#fff" stroke="#3c3c3c" stroke-width="1.5"/></svg>
<div class="a" style="left:601px;top:524px;width:1043px;height:19px;background:#ffffff;"></div>
<div class="a" style="left:560px;top:524px;width:40px;height:20px;background:#e3eaf6;"></div>
<div class="a" style="left:600px;top:524px;width:1px;height:20px;background:#b5cbe6;"></div>
<div class="a" style="left:601px;top:543px;width:1043px;height:1px;background:repeating-linear-gradient(90deg,#bdbdbd 0 1px,transparent 1px 2px)"></div>
<div class="a" style="left:772px;top:524px;width:1px;height:20px;background:repeating-linear-gradient(180deg,#bdbdbd 0 1px,transparent 1px 2px)"></div>
<div class="a" style="left:863px;top:524px;width:1px;height:20px;background:repeating-linear-gradient(180deg,#bdbdbd 0 1px,transparent 1px 2px)"></div>
<div class="a" style="left:1075px;top:524px;width:1px;height:20px;background:repeating-linear-gradient(180deg,#bdbdbd 0 1px,transparent 1px 2px)"></div>
<div class="a" style="left:1276px;top:524px;width:1px;height:20px;background:repeating-linear-gradient(180deg,#bdbdbd 0 1px,transparent 1px 2px)"></div>
<div class="a" style="left:1377px;top:524px;width:1px;height:20px;background:repeating-linear-gradient(180deg,#bdbdbd 0 1px,transparent 1px 2px)"></div>
<div class="a" style="left:1469px;top:524px;width:1px;height:20px;background:repeating-linear-gradient(180deg,#bdbdbd 0 1px,transparent 1px 2px)"></div>
<div class="a" style="left:1530px;top:524px;width:1px;height:20px;background:repeating-linear-gradient(180deg,#bdbdbd 0 1px,transparent 1px 2px)"></div>
<div class="a" style="left:1621px;top:524px;width:1px;height:20px;background:repeating-linear-gradient(180deg,#bdbdbd 0 1px,transparent 1px 2px)"></div>
<div class="t" style="left:604.00px;top:526.76px;font-size:16px;color:#1e1e1e;transform:scaleX(0.815);transform-origin:0 0;">T2335001</div>
<div class="t" style="left:775.50px;top:526.76px;font-size:16px;color:#1e1e1e;transform:scaleX(0.815);transform-origin:0 0;">DEBUT</div>
<div class="t" style="left:866.50px;top:526.76px;font-size:16px;color:#1e1e1e;transform:scaleX(0.815);transform-origin:0 0;">T2335001</div>
<div class="t" style="left:1380.50px;top:526.76px;font-size:16px;color:#1e1e1e;transform:scaleX(0.815);transform-origin:0 0;">ALU</div>
<svg style="left:1490px;top:526px" width="17" height="16" viewBox="0 0 17 16"><rect x="0.9" y="0.8" width="15" height="14.6" fill="#fff" stroke="#3c3c3c" stroke-width="1.5"/><path d="M3.1 7.6 L6.2 11 L13.6 3.7" fill="none" stroke="#3c3c3c" stroke-width="1.5"/></svg>
<svg style="left:1566px;top:526px" width="17" height="16" viewBox="0 0 17 16"><rect x="0.9" y="0.8" width="15" height="14.6" fill="#fff" stroke="#3c3c3c" stroke-width="1.5"/></svg>
<div class="a" style="left:601px;top:544px;width:1043px;height:19px;background:#f0f0f0;"></div>
<div class="a" style="left:560px;top:544px;width:40px;height:20px;background:#e3eaf6;"></div>
<div class="a" style="left:600px;top:544px;width:1px;height:20px;background:#b5cbe6;"></div>
<div class="a" style="left:601px;top:563px;width:1043px;height:1px;background:repeating-linear-gradient(90deg,#bdbdbd 0 1px,transparent 1px 2px)"></div>
<div class="a" style="left:772px;top:544px;width:1px;height:20px;background:repeating-linear-gradient(180deg,#bdbdbd 0 1px,transparent 1px 2px)"></div>
<div class="a" style="left:863px;top:544px;width:1px;height:20px;background:repeating-linear-gradient(180deg,#bdbdbd 0 1px,transparent 1px 2px)"></div>
<div class="a" style="left:1075px;top:544px;width:1px;height:20px;background:repeating-linear-gradient(180deg,#bdbdbd 0 1px,transparent 1px 2px)"></div>
<div class="a" style="left:1276px;top:544px;width:1px;height:20px;background:repeating-linear-gradient(180deg,#bdbdbd 0 1px,transparent 1px 2px)"></div>
<div class="a" style="left:1377px;top:544px;width:1px;height:20px;background:repeating-linear-gradient(180deg,#bdbdbd 0 1px,transparent 1px 2px)"></div>
<div class="a" style="left:1469px;top:544px;width:1px;height:20px;background:repeating-linear-gradient(180deg,#bdbdbd 0 1px,transparent 1px 2px)"></div>
<div class="a" style="left:1530px;top:544px;width:1px;height:20px;background:repeating-linear-gradient(180deg,#bdbdbd 0 1px,transparent 1px 2px)"></div>
<div class="a" style="left:1621px;top:544px;width:1px;height:20px;background:repeating-linear-gradient(180deg,#bdbdbd 0 1px,transparent 1px 2px)"></div>
<div class="t" style="left:604.00px;top:546.76px;font-size:16px;color:#1e1e1e;transform:scaleX(0.815);transform-origin:0 0;">23350006001</div>
<div class="t" style="left:775.50px;top:546.76px;font-size:16px;color:#1e1e1e;transform:scaleX(0.815);transform-origin:0 0;">DEBUT</div>
<div class="t" style="left:866.50px;top:546.76px;font-size:16px;color:#1e1e1e;transform:scaleX(0.815);transform-origin:0 0;">23350006001</div>
<div class="t" style="left:1380.50px;top:546.76px;font-size:16px;color:#1e1e1e;transform:scaleX(0.815);transform-origin:0 0;">ALU</div>
<svg style="left:1490px;top:546px" width="17" height="16" viewBox="0 0 17 16"><rect x="0.9" y="0.8" width="15" height="14.6" fill="#fff" stroke="#3c3c3c" stroke-width="1.5"/><path d="M3.1 7.6 L6.2 11 L13.6 3.7" fill="none" stroke="#3c3c3c" stroke-width="1.5"/></svg>
<svg style="left:1566px;top:546px" width="17" height="16" viewBox="0 0 17 16"><rect x="0.9" y="0.8" width="15" height="14.6" fill="#fff" stroke="#3c3c3c" stroke-width="1.5"/></svg>
<div class="a" style="left:601px;top:564px;width:1043px;height:19px;background:#ffffff;"></div>
<div class="a" style="left:560px;top:564px;width:40px;height:20px;background:#e3eaf6;"></div>
<div class="a" style="left:600px;top:564px;width:1px;height:20px;background:#b5cbe6;"></div>
<div class="a" style="left:601px;top:583px;width:1043px;height:1px;background:repeating-linear-gradient(90deg,#bdbdbd 0 1px,transparent 1px 2px)"></div>
<div class="a" style="left:772px;top:564px;width:1px;height:20px;background:repeating-linear-gradient(180deg,#bdbdbd 0 1px,transparent 1px 2px)"></div>
<div class="a" style="left:863px;top:564px;width:1px;height:20px;background:repeating-linear-gradient(180deg,#bdbdbd 0 1px,transparent 1px 2px)"></div>
<div class="a" style="left:1075px;top:564px;width:1px;height:20px;background:repeating-linear-gradient(180deg,#bdbdbd 0 1px,transparent 1px 2px)"></div>
<div class="a" style="left:1276px;top:564px;width:1px;height:20px;background:repeating-linear-gradient(180deg,#bdbdbd 0 1px,transparent 1px 2px)"></div>
<div class="a" style="left:1377px;top:564px;width:1px;height:20px;background:repeating-linear-gradient(180deg,#bdbdbd 0 1px,transparent 1px 2px)"></div>
<div class="a" style="left:1469px;top:564px;width:1px;height:20px;background:repeating-linear-gradient(180deg,#bdbdbd 0 1px,transparent 1px 2px)"></div>
<div class="a" style="left:1530px;top:564px;width:1px;height:20px;background:repeating-linear-gradient(180deg,#bdbdbd 0 1px,transparent 1px 2px)"></div>
<div class="a" style="left:1621px;top:564px;width:1px;height:20px;background:repeating-linear-gradient(180deg,#bdbdbd 0 1px,transparent 1px 2px)"></div>
<div class="t" style="left:604.00px;top:566.76px;font-size:16px;color:#1e1e1e;transform:scaleX(0.815);transform-origin:0 0;">23350008001</div>
<div class="t" style="left:775.50px;top:566.76px;font-size:16px;color:#1e1e1e;transform:scaleX(0.815);transform-origin:0 0;">DEBUT</div>
<div class="t" style="left:866.50px;top:566.76px;font-size:16px;color:#1e1e1e;transform:scaleX(0.815);transform-origin:0 0;">23350008001</div>
<div class="t" style="left:1380.50px;top:566.76px;font-size:16px;color:#1e1e1e;transform:scaleX(0.815);transform-origin:0 0;">ALU</div>
<svg style="left:1490px;top:566px" width="17" height="16" viewBox="0 0 17 16"><rect x="0.9" y="0.8" width="15" height="14.6" fill="#fff" stroke="#3c3c3c" stroke-width="1.5"/><path d="M3.1 7.6 L6.2 11 L13.6 3.7" fill="none" stroke="#3c3c3c" stroke-width="1.5"/></svg>
<svg style="left:1566px;top:566px" width="17" height="16" viewBox="0 0 17 16"><rect x="0.9" y="0.8" width="15" height="14.6" fill="#fff" stroke="#3c3c3c" stroke-width="1.5"/></svg>
<div class="a" style="left:560px;top:103px;width:40px;height:2px;background:#afc4dc;"></div>
<div class="a" style="left:560px;top:123px;width:40px;height:2px;background:#afc4dc;"></div>
<div class="a" style="left:560px;top:143px;width:40px;height:2px;background:#afc4dc;"></div>
<div class="a" style="left:560px;top:163px;width:40px;height:2px;background:#afc4dc;"></div>
<div class="a" style="left:560px;top:183px;width:40px;height:2px;background:#afc4dc;"></div>
<div class="a" style="left:560px;top:203px;width:40px;height:2px;background:#afc4dc;"></div>
<div class="a" style="left:560px;top:223px;width:40px;height:2px;background:#afc4dc;"></div>
<div class="a" style="left:560px;top:243px;width:40px;height:2px;background:#afc4dc;"></div>
<div class="a" style="left:560px;top:263px;width:40px;height:2px;background:#afc4dc;"></div>
<div class="a" style="left:560px;top:283px;width:40px;height:2px;background:#afc4dc;"></div>
<div class="a" style="left:560px;top:303px;width:40px;height:2px;background:#afc4dc;"></div>
<div class="a" style="left:560px;top:323px;width:40px;height:2px;background:#afc4dc;"></div>
<div class="a" style="left:560px;top:343px;width:40px;height:2px;background:#afc4dc;"></div>
<div class="a" style="left:560px;top:363px;width:40px;height:2px;background:#afc4dc;"></div>
<div class="a" style="left:560px;top:383px;width:40px;height:2px;background:#afc4dc;"></div>
<div class="a" style="left:560px;top:403px;width:40px;height:2px;background:#afc4dc;"></div>
<div class="a" style="left:560px;top:423px;width:40px;height:2px;background:#afc4dc;"></div>
<div class="a" style="left:560px;top:443px;width:40px;height:2px;background:#afc4dc;"></div>
<div class="a" style="left:560px;top:463px;width:40px;height:2px;background:#afc4dc;"></div>
<div class="a" style="left:560px;top:483px;width:40px;height:2px;background:#afc4dc;"></div>
<div class="a" style="left:560px;top:503px;width:40px;height:2px;background:#afc4dc;"></div>
<div class="a" style="left:560px;top:523px;width:40px;height:2px;background:#afc4dc;"></div>
<div class="a" style="left:560px;top:543px;width:40px;height:2px;background:#afc4dc;"></div>
<div class="a" style="left:560px;top:563px;width:40px;height:2px;background:#afc4dc;"></div>
<div class="a" style="left:560px;top:583px;width:40px;height:2px;background:#afc4dc;"></div>
<div class="a" style="left:601px;top:83px;width:1043px;height:1px;background:#b5c8de;"></div>
<div class="a" style="left:560px;top:83px;width:40px;height:1px;background:#98b6de;"></div>
<div class="a" style="left:601px;top:84px;width:1043px;height:1px;background:#dfe7f0;"></div>
<div class="a" style="left:601px;top:83px;width:171px;height:1.5px;background:#f3ad64;"></div>
<div class="a" style="left:600px;top:83px;width:1.5px;height:20px;background:#f3ad64;"></div>
<div class="a" style="left:560px;top:184px;width:40px;height:19px;background:#fdd58d;"></div>
<div class="a" style="left:560px;top:183px;width:40px;height:1.5px;background:#f3a650;"></div>
<div class="a" style="left:862px;top:182px;width:213px;height:24px;border:3px solid #000;background:#fff"></div>
<div class="t" style="left:866.50px;top:186.76px;font-size:16px;color:#1e1e1e;transform:scaleX(0.815);transform-origin:0 0;">23340003001</div>
<div class="a" style="left:880px;top:105px;width:385px;height:480px;background:#f0f0f0;border:1px solid #a0a0a0;box-shadow:2px 2px 2px rgba(0,0,0,0.3)"></div>
<div class="t" style="left:925.20px;top:114.81px;font-size:15.7px;color:#000;transform:scaleX(0.9191);transform-origin:0 0;-webkit-text-stroke:0.15px currentColor;">Actualiser</div>
<div class="a" style="left:918px;top:141px;width:344px;height:1px;background:#d5d5d5;"></div>
<div class="t" style="left:924.27px;top:151.06px;font-size:15.7px;color:#000;transform:scaleX(0.9272);transform-origin:0 0;-webkit-text-stroke:0.15px currentColor;">Déclaration Manuelle (F1)</div>
<div class="t" style="left:924.25px;top:178.56px;font-size:15.7px;color:#6d6d6d;transform:scaleX(0.9467);transform-origin:0 0;-webkit-text-stroke:0.15px currentColor;">Déclaration Manuelle Complète (Maj+F1)</div>
<div class="t" style="left:924.29px;top:206.06px;font-size:15.7px;color:#000;transform:scaleX(0.9067);transform-origin:0 0;-webkit-text-stroke:0.15px currentColor;">Déclaration Auto. Reste à Fab. (F9)</div>
<div class="t" style="left:924.25px;top:233.56px;font-size:15.7px;color:#000;transform:scaleX(0.9470);transform-origin:0 0;-webkit-text-stroke:0.15px currentColor;">Déclaration Auto. Qté. Cond.</div>
<div class="t" style="left:924.28px;top:261.06px;font-size:15.7px;color:#000;transform:scaleX(0.9195);transform-origin:0 0;-webkit-text-stroke:0.15px currentColor;">Déclaration Surplus</div>
<div class="t" style="left:924.27px;top:288.56px;font-size:15.7px;color:#000;transform:scaleX(0.9256);transform-origin:0 0;-webkit-text-stroke:0.15px currentColor;">Déclaration Rebut</div>
<div class="t" style="left:924.26px;top:316.06px;font-size:15.7px;color:#000;transform:scaleX(0.9370);transform-origin:0 0;-webkit-text-stroke:0.15px currentColor;">Déclaration Retour</div>
<div class="t" style="left:925.20px;top:343.56px;font-size:15.7px;color:#000;transform:scaleX(0.8746);transform-origin:0 0;-webkit-text-stroke:0.15px currentColor;">Solde Etape</div>
<div class="a" style="left:918px;top:369px;width:344px;height:1px;background:#d5d5d5;"></div>
<div class="a" style="left:884px;top:374.0px;width:378px;height:27.5px;background:#91c9f7;"></div>
<div class="t" style="left:925.20px;top:379.81px;font-size:15.7px;color:#000;transform:scaleX(0.9256);transform-origin:0 0;-webkit-text-stroke:0.15px currentColor;">Affectation RL</div>
<svg style="left:1243px;top:382.5px" width="8" height="10" viewBox="0 0 8 10"><path d="M1.5 1 L5.5 5 L1.5 9" fill="none" stroke="#333" stroke-width="1.3"/></svg>
<div class="t" style="left:925.20px;top:407.31px;font-size:15.7px;color:#000;transform:scaleX(0.9356);transform-origin:0 0;-webkit-text-stroke:0.15px currentColor;">Affectation Sous-Traitance</div>
<svg style="left:1243px;top:410.0px" width="8" height="10" viewBox="0 0 8 10"><path d="M1.5 1 L5.5 5 L1.5 9" fill="none" stroke="#333" stroke-width="1.3"/></svg>
<div class="t" style="left:925.20px;top:434.81px;font-size:15.7px;color:#000;transform:scaleX(0.9746);transform-origin:0 0;-webkit-text-stroke:0.15px currentColor;">Affectation Substitution</div>
<svg style="left:1243px;top:437.5px" width="8" height="10" viewBox="0 0 8 10"><path d="M1.5 1 L5.5 5 L1.5 9" fill="none" stroke="#333" stroke-width="1.3"/></svg>
<div class="a" style="left:918px;top:461px;width:344px;height:1px;background:#d5d5d5;"></div>
<div class="t" style="left:925.20px;top:471.06px;font-size:15.7px;color:#000;transform:scaleX(0.9365);transform-origin:0 0;-webkit-text-stroke:0.15px currentColor;">Ordonnancement (F11)</div>
<div class="t" style="left:924.26px;top:498.56px;font-size:15.7px;color:#000;transform:scaleX(0.9378);transform-origin:0 0;-webkit-text-stroke:0.15px currentColor;">Reset Ordonnancement (Maj+F11)</div>
<div class="a" style="left:918px;top:524px;width:344px;height:1px;background:#d5d5d5;"></div>
<div class="t" style="left:924.27px;top:534.81px;font-size:15.7px;color:#000;transform:scaleX(0.9270);transform-origin:0 0;-webkit-text-stroke:0.15px currentColor;">Informations Suivies (F3)</div>
<div class="a" style="left:918px;top:561px;width:344px;height:1px;background:#d5d5d5;"></div>
<div class="a" style="left:1258px;top:370px;width:327px;height:191px;background:#f0f0f0;border:1px solid #a0a0a0;box-shadow:2px 2px 2px rgba(0,0,0,0.3)"></div>
<div class="t" style="left:1303.00px;top:379.86px;font-size:15.7px;color:#000;transform:scaleX(0.9237);transform-origin:0 0;-webkit-text-stroke:0.15px currentColor;">Création RL / Sélection (Maj+F9)</div>
<div class="t" style="left:1303.00px;top:407.36px;font-size:15.7px;color:#000;transform:scaleX(0.9257);transform-origin:0 0;-webkit-text-stroke:0.15px currentColor;">Choix RL / Sélection (Maj+F2)</div>
<div class="t" style="left:1302.07px;top:434.86px;font-size:15.7px;color:#000;transform:scaleX(0.9259);transform-origin:0 0;-webkit-text-stroke:0.15px currentColor;">Détachement RL (Maj+F6)</div>
<div class="a" style="left:1296px;top:460px;width:284px;height:1px;background:#d5d5d5;"></div>
<div class="a" style="left:1262px;top:465.2px;width:318px;height:27.5px;background:#91c9f7;"></div>
<div class="t" style="left:1303.00px;top:471.11px;font-size:15.7px;color:#000;transform:scaleX(0.9422);transform-origin:0 0;-webkit-text-stroke:0.15px currentColor;">Affectation RL Partiel / Net</div>
<div class="t" style="left:1303.00px;top:498.61px;font-size:15.7px;color:#000;transform:scaleX(0.9474);transform-origin:0 0;-webkit-text-stroke:0.15px currentColor;">Affectation RL Partiel / Manuelle</div>
<div class="a" style="left:1296px;top:524px;width:284px;height:1px;background:#d5d5d5;"></div>
<div class="t" style="left:1302.08px;top:534.86px;font-size:15.7px;color:#000;transform:scaleX(0.9240);transform-origin:0 0;-webkit-text-stroke:0.15px currentColor;">Désaffectation RL Partiel</div>
<svg style="left:1520px;top:470px" width="26" height="38" viewBox="0 0 26 38"><path d="M4.5 5.5 L4.5 29.5 L10 24.5 L13.8 33.8 L19.8 31.8 L16.2 23.2 L22.5 22.8 Z" fill="#000"/><path d="M6.1 9.3 L6.1 25.9 L10.6 21.9 L14.7 31.5 L17.7 30.5 L13.9 21.5 L18.8 21.2 Z" fill="#fff"/></svg>
</body></html>
